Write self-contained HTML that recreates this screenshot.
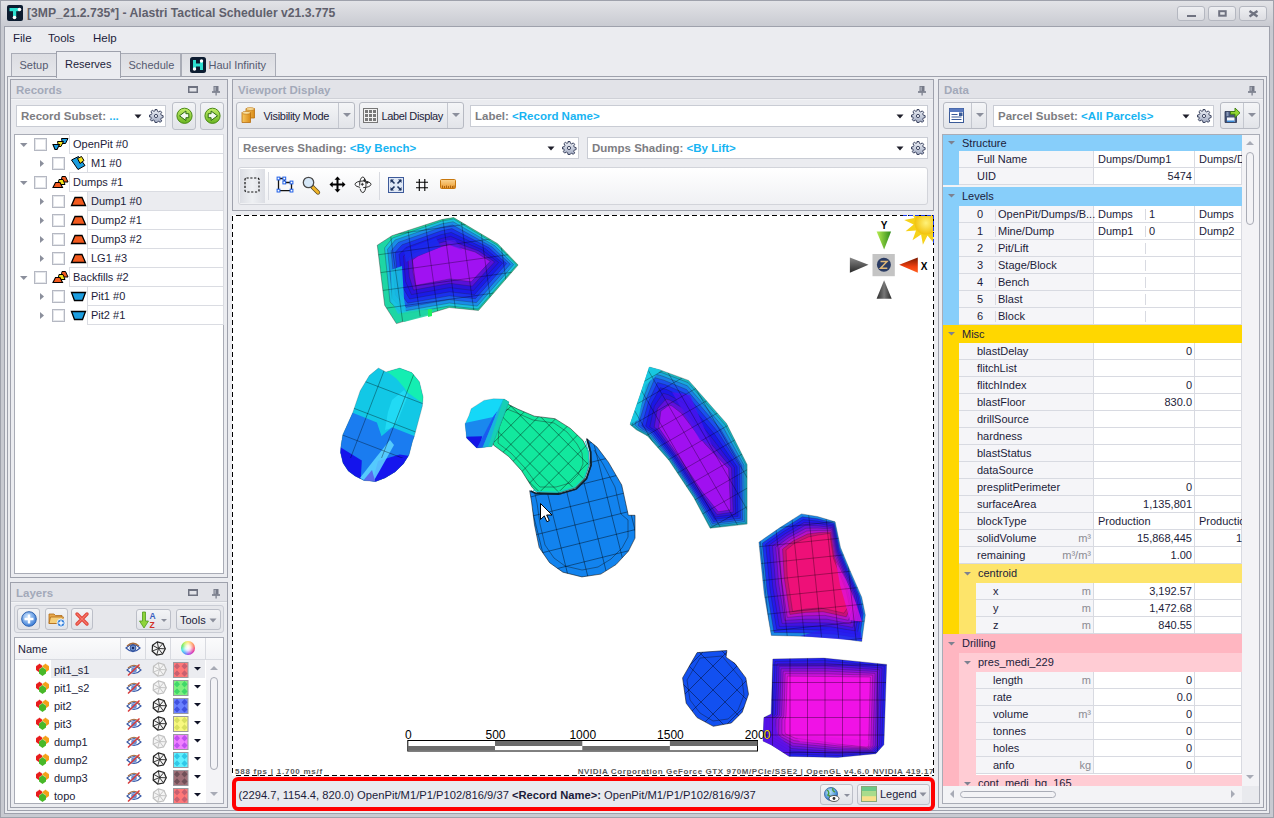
<!DOCTYPE html><html><head><meta charset="utf-8"><style>
*{box-sizing:border-box;margin:0;padding:0}
html,body{width:1274px;height:818px;overflow:hidden}
body{position:relative;background:#c8cad1;font-family:"Liberation Sans",sans-serif;font-size:11px;color:#1e1e38}
.a{position:absolute}
.t{position:absolute;white-space:nowrap;line-height:13px}
svg{position:absolute;overflow:visible}
.hd{position:absolute;white-space:nowrap;font-weight:bold;font-size:11.5px;color:#a3a9b9;line-height:13px}
.lb{font-weight:bold;color:#7d7d82}
.cy{font-weight:bold;color:#17b4f2}
</style></head><body><div class="a" style="left:0px;top:0px;width:1274px;height:26px;background:linear-gradient(#e5e6ea,#dddee3)"></div>
<div class="a" style="left:0px;top:0px;width:1274px;height:818px;border:1px solid #9ea1ab"></div>
<div class="a" style="left:0px;top:0px;width:1274px;height:26px;background:linear-gradient(#e2e3e7,#d8d9de 40%,#c9cbd2);border:1px solid #9ea1ab;border-bottom:none"></div>
<div class="a" style="left:4px;top:26px;width:1266px;height:788px;background:#ebecf0;border:1px solid #9ea1ac"></div>
<div class="t" style="left:27px;top:7px;font-size:12.2px;font-weight:bold;color:#5f606c">[3MP_21.2.735*] - Alastri Tactical Scheduler v21.3.775</div>
<svg style="left:7px;top:5px" width="16" height="16"><rect x="0" y="0" width="16" height="16" rx="2" fill="#0c1c30"/><rect x="2.5" y="3" width="10" height="3.2" fill="#2ee0d0"/><rect x="6" y="3" width="3.2" height="10" fill="#2ee0d0"/><circle cx="12.5" cy="4.5" r="1.8" fill="#fff"/><circle cx="7.5" cy="12.5" r="1.8" fill="#fff"/></svg>
<div class="a" style="left:1177px;top:6px;width:28px;height:15px;border:1px solid #b4b7c0;border-radius:3px;background:linear-gradient(#eeeff2,#dcdde2)"></div>
<div class="a" style="left:1208px;top:6px;width:28px;height:15px;border:1px solid #b4b7c0;border-radius:3px;background:linear-gradient(#eeeff2,#dcdde2)"></div>
<div class="a" style="left:1239px;top:6px;width:28px;height:15px;border:1px solid #b4b7c0;border-radius:3px;background:linear-gradient(#eeeff2,#dcdde2)"></div>
<svg style="left:1177px;top:6px" width="100" height="15"><rect x="10" y="9" width="9" height="2" fill="#6f7280"/><rect x="42.2" y="5.2" width="6.5" height="4.5" fill="none" stroke="#6f7280" stroke-width="2"/><path d="M72.5 5 L80.5 10.5 M80.5 5 L72.5 10.5" stroke="#6f7280" stroke-width="2.4"/></svg>
<div class="t" style="left:13px;top:31.5px;font-size:11.5px;color:#1c1c3a">File</div>
<div class="t" style="left:48px;top:31.5px;font-size:11.5px;color:#1c1c3a">Tools</div>
<div class="t" style="left:93px;top:31.5px;font-size:11.5px;color:#1c1c3a">Help</div>
<div class="a" style="left:7px;top:76px;width:1260px;height:735px;border:1px solid #9ea1ac;background:#ebecf0"></div>
<div class="a" style="left:11px;top:53px;width:46px;height:23px;background:linear-gradient(#dcdde2,#e6e7eb);border:1px solid #a9acb6;border-bottom:none"></div>
<div class="t" style="left:19.5px;top:59px;font-size:11px;color:#555a70;z-index:3">Setup</div>
<div class="a" style="left:56px;top:51px;width:65px;height:27px;background:#ebecf0;border:1px solid #9ea1ac;border-bottom:none;z-index:2"></div>
<div class="t" style="left:65px;top:58px;font-size:11px;color:#1c1c3a;z-index:3">Reserves</div>
<div class="a" style="left:120px;top:53px;width:61px;height:23px;background:linear-gradient(#dcdde2,#e6e7eb);border:1px solid #a9acb6;border-bottom:none"></div>
<div class="t" style="left:128.5px;top:59px;font-size:11px;color:#555a70;z-index:3">Schedule</div>
<div class="a" style="left:181px;top:53px;width:95px;height:23px;background:linear-gradient(#dcdde2,#e6e7eb);border:1px solid #a9acb6;border-bottom:none"></div>
<div class="t" style="left:208.5px;top:59px;font-size:11px;color:#555a70;z-index:3">Haul Infinity</div>
<svg style="left:190px;top:57px;z-index:3" width="16" height="16"><rect width="16" height="16" rx="2.5" fill="#0c1c30"/><rect x="3" y="3" width="3" height="10" fill="#2ee0d0"/><rect x="10" y="3" width="3" height="10" fill="#2ee0d0"/><rect x="3" y="6.5" width="10" height="3" fill="#2ee0d0"/><circle cx="11.5" cy="4" r="1.7" fill="#fff"/><circle cx="4.5" cy="12" r="1.7" fill="#fff"/></svg>
<div class="a" style="left:10px;top:79px;width:218px;height:499px;border:1px solid #9ea1ac;background:#ebecf0"></div>
<div class="a" style="left:11px;top:80px;width:216px;height:18px;background:#e2e3e8"></div>
<div class="a" style="left:11px;top:98px;width:216px;height:1px;background:#cfd1d7"></div>
<div class="a" style="left:11px;top:99px;width:216px;height:1px;background:#f3f4f6"></div>
<div class="hd" style="left:16px;top:84px">Records</div>
<svg style="left:212px;top:86px" width="8" height="10"><rect x="1.5" y="0" width="5" height="5.5" fill="#767a88"/><rect x="2.5" y="0.8" width="1.2" height="4" fill="#b8bcc6"/><rect x="0" y="5.2" width="8" height="1.6" fill="#767a88"/><rect x="3.5" y="6.5" width="1.2" height="3" fill="#767a88"/></svg>
<svg style="left:188px;top:86px" width="10" height="7"><rect x="0.75" y="0.75" width="8.5" height="5.5" fill="none" stroke="#6e7280" stroke-width="1.5"/><rect x="0" y="0" width="10" height="2" fill="#6e7280"/></svg>
<div class="a" style="left:10px;top:582px;width:218px;height:226px;border:1px solid #9ea1ac;background:#ebecf0"></div>
<div class="a" style="left:11px;top:583px;width:216px;height:18px;background:#e2e3e8"></div>
<div class="a" style="left:11px;top:601px;width:216px;height:1px;background:#cfd1d7"></div>
<div class="a" style="left:11px;top:602px;width:216px;height:1px;background:#f3f4f6"></div>
<div class="hd" style="left:16px;top:587px">Layers</div>
<svg style="left:212px;top:589px" width="8" height="10"><rect x="1.5" y="0" width="5" height="5.5" fill="#767a88"/><rect x="2.5" y="0.8" width="1.2" height="4" fill="#b8bcc6"/><rect x="0" y="5.2" width="8" height="1.6" fill="#767a88"/><rect x="3.5" y="6.5" width="1.2" height="3" fill="#767a88"/></svg>
<svg style="left:188px;top:589px" width="10" height="7"><rect x="0.75" y="0.75" width="8.5" height="5.5" fill="none" stroke="#6e7280" stroke-width="1.5"/><rect x="0" y="0" width="10" height="2" fill="#6e7280"/></svg>
<div class="a" style="left:232px;top:79px;width:702px;height:132px;border:1px solid #9ea1ac;background:#ebecf0"></div>
<div class="a" style="left:233px;top:80px;width:700px;height:18px;background:#e2e3e8"></div>
<div class="a" style="left:233px;top:98px;width:700px;height:1px;background:#cfd1d7"></div>
<div class="a" style="left:233px;top:99px;width:700px;height:1px;background:#f3f4f6"></div>
<div class="hd" style="left:238px;top:84px">Viewport Display</div>
<svg style="left:918px;top:86px" width="8" height="10"><rect x="1.5" y="0" width="5" height="5.5" fill="#767a88"/><rect x="2.5" y="0.8" width="1.2" height="4" fill="#b8bcc6"/><rect x="0" y="5.2" width="8" height="1.6" fill="#767a88"/><rect x="3.5" y="6.5" width="1.2" height="3" fill="#767a88"/></svg>
<div class="a" style="left:938px;top:79px;width:326px;height:729px;border:1px solid #9ea1ac;background:#ebecf0"></div>
<div class="a" style="left:939px;top:80px;width:324px;height:18px;background:#e2e3e8"></div>
<div class="a" style="left:939px;top:98px;width:324px;height:1px;background:#cfd1d7"></div>
<div class="a" style="left:939px;top:99px;width:324px;height:1px;background:#f3f4f6"></div>
<div class="hd" style="left:944px;top:84px">Data</div>
<svg style="left:1248px;top:86px" width="8" height="10"><rect x="1.5" y="0" width="5" height="5.5" fill="#767a88"/><rect x="2.5" y="0.8" width="1.2" height="4" fill="#b8bcc6"/><rect x="0" y="5.2" width="8" height="1.6" fill="#767a88"/><rect x="3.5" y="6.5" width="1.2" height="3" fill="#767a88"/></svg>
<div class="a" style="left:16px;top:105px;width:150px;height:22px;background:#fff;border:1px solid #c9ccd4"></div>
<div class="t" style="left:21px;top:110px;font-size:11.5px"><span class="lb">Record Subset:</span> <span class="cy">...</span></div>
<svg style="left:134px;top:114px" width="8" height="5"><path d="M0.5 0.5h7l-3.5 4z" fill="#1e1e2a"/></svg>
<svg style="left:149px;top:109px" width="14" height="14" viewBox="0 0 14 14"><defs><linearGradient id="gr" x1="0" y1="0" x2="0" y2="1"><stop offset="0" stop-color="#eef1f7"/><stop offset="1" stop-color="#a2abc2"/></linearGradient></defs><path d="M6 0.5h2l.4 1.8 1.3.6 1.6-1 1.4 1.4-1 1.6.6 1.3 1.8.4v2l-1.8.4-.6 1.3 1 1.6-1.4 1.4-1.6-1-1.3.6L8 13.5H6l-.4-1.8-1.3-.6-1.6 1-1.4-1.4 1-1.6-.6-1.3L.5 8V6l1.8-.4.6-1.3-1-1.6 1.4-1.4 1.6 1 1.3-.6z" fill="url(#gr)" stroke="#3e4662" stroke-width="1"/><circle cx="7" cy="7" r="1.6" fill="#f4f6fa" stroke="#3e4662" stroke-width="1"/></svg>
<div class="a" style="left:172px;top:102px;width:24px;height:28px;border:1px solid #bcbfc8;border-radius:3px;background:linear-gradient(#f3f4f6,#e1e3e8)"></div>
<div class="a" style="left:200px;top:102px;width:24px;height:28px;border:1px solid #bcbfc8;border-radius:3px;background:linear-gradient(#f3f4f6,#e1e3e8)"></div>
<svg style="left:174.5px;top:106px" width="19" height="19"><defs><linearGradient id="gL" x1="0" y1="0" x2="0" y2="1"><stop offset="0" stop-color="#c4ee6a"/><stop offset="1" stop-color="#68b420"/></linearGradient></defs><circle cx="9.5" cy="9.8" r="7.6" fill="url(#gL)" stroke="#4a8a18"/><path d="M4.5 9.8 L10.9 5 V7.7 H13.8 V11.7 H10.9 V14.5 Z" fill="#f4f8f0" stroke="#2d6a10" stroke-width="1" stroke-linejoin="round"/></svg>
<svg style="left:202.5px;top:106px" width="19" height="19"><defs><linearGradient id="gR" x1="0" y1="0" x2="0" y2="1"><stop offset="0" stop-color="#c4ee6a"/><stop offset="1" stop-color="#68b420"/></linearGradient></defs><circle cx="9.5" cy="9.8" r="7.6" fill="url(#gR)" stroke="#4a8a18"/><path d="M14.5 9.8 L8.1 5 V7.7 H5.2 V11.7 H8.1 V14.5 Z" fill="#f4f8f0" stroke="#2d6a10" stroke-width="1" stroke-linejoin="round"/></svg>
<div class="a" style="left:14px;top:134px;width:210px;height:440px;background:#fff;border:1px solid #a9acb6"></div>
<div class="a" style="left:69px;top:134px;width:155px;height:20px;border:1px solid #dadce2;background:#fff"></div>
<svg style="left:20px;top:143px" width="8" height="5"><path d="M0 0h7.5l-3.75 4z" fill="#8b8f9c"/></svg>
<div class="a" style="left:34px;top:138px;width:13px;height:13px;border:1px solid #b5b8c2;background:#fff;box-shadow:inset 0 0 0 1px #e4e6ea"></div>
<svg style="left:52px;top:137px" width="17" height="14"><path d="M9.5 1.5h6.5l-2.5 5h-3z" fill="#1c9ee0" stroke="#000" stroke-width="1"/><path d="M5.5 4.5h6l-2.5 5h-2.5z" fill="#f4e21c" stroke="#000" stroke-width="1"/><path d="M1 7.5h6.5l-2.5 5h-2z" fill="#1c9ee0" stroke="#000" stroke-width="1.1"/></svg>
<div class="t" style="left:73px;top:138px;font-size:11px;color:#1c1c3a">OpenPit #0</div>
<div class="a" style="left:87px;top:153px;width:137px;height:20px;border:1px solid #dadce2;background:#fff"></div>
<svg style="left:40px;top:160px" width="5" height="8"><path d="M0 0v7l4-3.5z" fill="#8b8f9c"/></svg>
<div class="a" style="left:52px;top:157px;width:13px;height:13px;border:1px solid #b5b8c2;background:#fff;box-shadow:inset 0 0 0 1px #e4e6ea"></div>
<svg style="left:70px;top:155px" width="17" height="16"><path d="M1.5 5l7-3.5 6.5 9-7 4z" fill="#1c9ee0" stroke="#000" stroke-width="1"/><path d="M7.5 3.5l4-2 2.5 4-4 3z" fill="#f4e21c" stroke="#000" stroke-width="1"/></svg>
<div class="t" style="left:91px;top:157px;font-size:11px;color:#1c1c3a">M1 #0</div>
<div class="a" style="left:69px;top:172px;width:155px;height:20px;border:1px solid #dadce2;background:#fff"></div>
<svg style="left:20px;top:181px" width="8" height="5"><path d="M0 0h7.5l-3.75 4z" fill="#8b8f9c"/></svg>
<div class="a" style="left:34px;top:176px;width:13px;height:13px;border:1px solid #b5b8c2;background:#fff;box-shadow:inset 0 0 0 1px #e4e6ea"></div>
<svg style="left:52px;top:175px" width="17" height="14"><path d="M10 1.5h3.5l2.5 5.5h-7z" fill="#f25a1e" stroke="#000" stroke-width="1"/><path d="M7 4.5h4l2 5h-7z" fill="#f4e21c" stroke="#000" stroke-width="1"/><path d="M3.5 7.5h4.5l2.5 5H1z" fill="#f25a1e" stroke="#000" stroke-width="1.1"/></svg>
<div class="t" style="left:73px;top:176px;font-size:11px;color:#1c1c3a">Dumps #1</div>
<div class="a" style="left:87px;top:191px;width:137px;height:20px;border:1px solid #dadce2;background:#ebecf0"></div>
<svg style="left:40px;top:198px" width="5" height="8"><path d="M0 0v7l4-3.5z" fill="#8b8f9c"/></svg>
<div class="a" style="left:52px;top:195px;width:13px;height:13px;border:1px solid #b5b8c2;background:#fff;box-shadow:inset 0 0 0 1px #e4e6ea"></div>
<svg style="left:70px;top:195px" width="17" height="13"><path d="M5 2.5h7l3.5 8H1.5z" fill="#f25a1e" stroke="#000" stroke-width="1.3"/></svg>
<div class="t" style="left:91px;top:195px;font-size:11px;color:#1c1c3a">Dump1 #0</div>
<div class="a" style="left:87px;top:210px;width:137px;height:20px;border:1px solid #dadce2;background:#fff"></div>
<svg style="left:40px;top:217px" width="5" height="8"><path d="M0 0v7l4-3.5z" fill="#8b8f9c"/></svg>
<div class="a" style="left:52px;top:214px;width:13px;height:13px;border:1px solid #b5b8c2;background:#fff;box-shadow:inset 0 0 0 1px #e4e6ea"></div>
<svg style="left:70px;top:214px" width="17" height="13"><path d="M5 2.5h7l3.5 8H1.5z" fill="#f25a1e" stroke="#000" stroke-width="1.3"/></svg>
<div class="t" style="left:91px;top:214px;font-size:11px;color:#1c1c3a">Dump2 #1</div>
<div class="a" style="left:87px;top:229px;width:137px;height:20px;border:1px solid #dadce2;background:#fff"></div>
<svg style="left:40px;top:236px" width="5" height="8"><path d="M0 0v7l4-3.5z" fill="#8b8f9c"/></svg>
<div class="a" style="left:52px;top:233px;width:13px;height:13px;border:1px solid #b5b8c2;background:#fff;box-shadow:inset 0 0 0 1px #e4e6ea"></div>
<svg style="left:70px;top:233px" width="17" height="13"><path d="M5 2.5h7l3.5 8H1.5z" fill="#f25a1e" stroke="#000" stroke-width="1.3"/></svg>
<div class="t" style="left:91px;top:233px;font-size:11px;color:#1c1c3a">Dump3 #2</div>
<div class="a" style="left:87px;top:248px;width:137px;height:20px;border:1px solid #dadce2;background:#fff"></div>
<svg style="left:40px;top:255px" width="5" height="8"><path d="M0 0v7l4-3.5z" fill="#8b8f9c"/></svg>
<div class="a" style="left:52px;top:252px;width:13px;height:13px;border:1px solid #b5b8c2;background:#fff;box-shadow:inset 0 0 0 1px #e4e6ea"></div>
<svg style="left:70px;top:252px" width="17" height="13"><path d="M5 2.5h7l3.5 8H1.5z" fill="#f25a1e" stroke="#000" stroke-width="1.3"/></svg>
<div class="t" style="left:91px;top:252px;font-size:11px;color:#1c1c3a">LG1 #3</div>
<div class="a" style="left:69px;top:267px;width:155px;height:20px;border:1px solid #dadce2;background:#fff"></div>
<svg style="left:20px;top:276px" width="8" height="5"><path d="M0 0h7.5l-3.75 4z" fill="#8b8f9c"/></svg>
<div class="a" style="left:34px;top:271px;width:13px;height:13px;border:1px solid #b5b8c2;background:#fff;box-shadow:inset 0 0 0 1px #e4e6ea"></div>
<svg style="left:52px;top:270px" width="17" height="14"><path d="M10 1.5h3.5l2.5 5.5h-7z" fill="#f25a1e" stroke="#000" stroke-width="1"/><path d="M7 4.5h4l2 5h-7z" fill="#f4e21c" stroke="#000" stroke-width="1"/><path d="M3.5 7.5h4.5l2.5 5H1z" fill="#f25a1e" stroke="#000" stroke-width="1.1"/></svg>
<div class="t" style="left:73px;top:271px;font-size:11px;color:#1c1c3a">Backfills #2</div>
<div class="a" style="left:87px;top:286px;width:137px;height:20px;border:1px solid #dadce2;background:#fff"></div>
<svg style="left:40px;top:293px" width="5" height="8"><path d="M0 0v7l4-3.5z" fill="#8b8f9c"/></svg>
<div class="a" style="left:52px;top:290px;width:13px;height:13px;border:1px solid #b5b8c2;background:#fff;box-shadow:inset 0 0 0 1px #e4e6ea"></div>
<svg style="left:70px;top:290px" width="17" height="13"><path d="M1.5 2.5h14l-3 8h-8z" fill="#1c9ee0" stroke="#000" stroke-width="1.3"/></svg>
<div class="t" style="left:91px;top:290px;font-size:11px;color:#1c1c3a">Pit1 #0</div>
<div class="a" style="left:87px;top:305px;width:137px;height:20px;border:1px solid #dadce2;background:#fff"></div>
<svg style="left:40px;top:312px" width="5" height="8"><path d="M0 0v7l4-3.5z" fill="#8b8f9c"/></svg>
<div class="a" style="left:52px;top:309px;width:13px;height:13px;border:1px solid #b5b8c2;background:#fff;box-shadow:inset 0 0 0 1px #e4e6ea"></div>
<svg style="left:70px;top:309px" width="17" height="13"><path d="M1.5 2.5h14l-3 8h-8z" fill="#1c9ee0" stroke="#000" stroke-width="1.3"/></svg>
<div class="t" style="left:91px;top:309px;font-size:11px;color:#1c1c3a">Pit2 #1</div>
<div class="a" style="left:14px;top:605px;width:210px;height:28px;border:1px solid #c9ccd4;border-radius:3px;background:#e6e7eb"></div>
<div class="a" style="left:17px;top:608px;width:23px;height:22px;border:1px solid #bcbfc8;border-radius:3px;background:linear-gradient(#f3f4f6,#e1e3e8)"></div>
<div class="a" style="left:45px;top:608px;width:23px;height:22px;border:1px solid #bcbfc8;border-radius:3px;background:linear-gradient(#f3f4f6,#e1e3e8)"></div>
<div class="a" style="left:71px;top:608px;width:22px;height:22px;border:1px solid #bcbfc8;border-radius:3px;background:linear-gradient(#f3f4f6,#e1e3e8)"></div>
<svg style="left:21px;top:611px" width="16" height="16"><defs><radialGradient id="gp" cx="40%" cy="35%" r="65%"><stop offset="0" stop-color="#cfe6ff"/><stop offset="1" stop-color="#3d7fd8"/></radialGradient></defs><circle cx="8" cy="8" r="7.3" fill="url(#gp)" stroke="#2d62b0"/><path d="M8 3.5v9M3.5 8h9" stroke="#fff" stroke-width="2.4"/></svg>
<svg style="left:48px;top:610px" width="18" height="18"><path d="M1 4h5l1.5 1.5H14v8H1z" fill="#e8a84a" stroke="#b06a18" stroke-width="0.8"/><path d="M2.5 7h13l-2 6.5H1z" fill="#f6cf7a" stroke="#b06a18" stroke-width="0.8"/><circle cx="13" cy="13" r="4" fill="#3d86dc" stroke="#fff" stroke-width="0.8"/><path d="M13 10.5v5M10.5 13h5" stroke="#fff" stroke-width="1.4"/></svg>
<svg style="left:75px;top:612px" width="14" height="14"><path d="M2 2L12 12M12 2L2 12" stroke="#e0453a" stroke-width="3.4" stroke-linecap="round"/><path d="M2 2L12 12M12 2L2 12" stroke="#f6786a" stroke-width="1.2" stroke-linecap="round"/></svg>
<div class="a" style="left:136px;top:609px;width:35px;height:21px;border:1px solid #bcbfc8;border-radius:3px;background:linear-gradient(#f3f4f6,#e1e3e8)"></div>
<svg style="left:138px;top:610px" width="32" height="20"><path d="M4.5 2h3v9h3l-4.5 7-4.5-7h3z" fill="#8ed43a" stroke="#4f9a1a" stroke-width="0.8"/><text x="11.5" y="9" font-family="Liberation Sans" font-weight="bold" font-size="8.5" fill="#3a5ec0">A</text><text x="11.5" y="18" font-family="Liberation Sans" font-weight="bold" font-size="8.5" fill="#d03028">Z</text><path d="M23 9h6l-3 3z" fill="#8b8f9c"/></svg>
<div class="a" style="left:176px;top:609px;width:45px;height:21px;border:1px solid #bcbfc8;border-radius:3px;background:linear-gradient(#f3f4f6,#e1e3e8)"></div>
<div class="t" style="left:180px;top:614px;font-size:11px;color:#1c1c3a">Tools</div>
<svg style="left:209px;top:618px" width="8" height="5"><path d="M0.5 0.5h7l-3.5 4z" fill="#8b8f9c"/></svg>
<div class="a" style="left:14px;top:637px;width:210px;height:167px;background:#fff;border:1px solid #a9acb6"></div>
<div class="a" style="left:15px;top:638px;width:208px;height:22px;background:linear-gradient(#fbfbfc,#f1f2f5);border-bottom:1px solid #d8dae0"></div>
<div class="a" style="left:120px;top:638px;width:1px;height:22px;background:#d8dae0"></div>
<div class="a" style="left:145px;top:638px;width:1px;height:22px;background:#d8dae0"></div>
<div class="a" style="left:170px;top:638px;width:1px;height:22px;background:#d8dae0"></div>
<div class="a" style="left:205px;top:638px;width:1px;height:22px;background:#d8dae0"></div>
<div class="t" style="left:18px;top:642.5px;font-size:11px;color:#1c1c3a">Name</div>
<svg style="left:125px;top:642px" width="16" height="12"><path d="M1 6Q8 -1 15 6Q8 13 1 6z" fill="#fff" stroke="#3a5aa8" stroke-width="1.2"/><circle cx="8" cy="6" r="3" fill="#6a8fd0" stroke="#2a4a90" stroke-width="0.8"/><circle cx="8" cy="6" r="1.2" fill="#1a2a60"/><path d="M2 4Q8 -1.5 14 4" fill="none" stroke="#a86a3a" stroke-width="1.2"/></svg>
<svg style="left:151px;top:641px" width="15" height="15"><polygon points="6.3,0.8 12.0,2.4 14.3,7.8 11.5,13.0 5.7,14.0 1.2,10.2 1.5,4.3" fill="#f4f4f4" stroke="#222" stroke-width="1.2"/><path d="M7.5 7.5L6.3 0.8M7.5 7.5L12.0 2.4M7.5 7.5L14.3 7.8M7.5 7.5L11.5 13.0M7.5 7.5L5.7 14.0M7.5 7.5L1.2 10.2M7.5 7.5L1.5 4.3" stroke="#222" stroke-width="0.9"/></svg>
<div class="a" style="left:181px;top:641px;width:14px;height:14px;border-radius:50%;background:radial-gradient(circle at 50% 50%,#fff 0,rgba(255,255,255,0.85) 25%,rgba(255,255,255,0) 75%),conic-gradient(from 0deg,#ffe060,#ff6040 70deg,#e0108a 120deg,#a020e0 170deg,#3080ff 210deg,#20e0e0 250deg,#40e040 290deg,#c0f040 330deg,#ffe060)"></div>
<div class="a" style="left:51px;top:660px;width:154px;height:18px;background:#ebecf0"></div>
<svg style="left:35px;top:662px" width="15" height="14"><path d="M1 4l3.5-2.5 3.5 2.5v4l-3.5 2.5-3.5-2.5z" fill="#e81c1c"/><path d="M7 4l3.5-2.5 3.5 2.5v4l-3.5 2.5-3.5-2.5z" fill="#f4a018"/><path d="M4 7.5l3.5-2.5 3.5 2.5v4l-3.5 2.5-3.5-2.5z" fill="#48b828"/><path d="M1 4l3.5-2.5 3.5 2.5M7 4l3.5-2.5 3.5 2.5M4 7.5l3.5-2.5 3.5 2.5" stroke="#fff" stroke-opacity="0.5" fill="none" stroke-width="0.8"/></svg>
<div class="t" style="left:54px;top:664px;font-size:11px;color:#1c1c3a">pit1_s1</div>
<svg style="left:126px;top:663px" width="16" height="13"><path d="M1 7Q8 0 15 7Q8 14 1 7z" fill="#fff" stroke="#3a5aa8" stroke-width="1.1"/><circle cx="8" cy="7" r="2.8" fill="#6a8fd0"/><path d="M2 5Q8 -0.5 14 5" fill="none" stroke="#a86a3a" stroke-width="1.1"/><path d="M2 12.5L13.5 1.5" stroke="#d83a3a" stroke-width="1.5"/></svg>
<svg style="left:152px;top:662px" width="15" height="15"><polygon points="6.3,0.8 12.0,2.4 14.3,7.8 11.5,13.0 5.7,14.0 1.2,10.2 1.5,4.3" fill="#f4f4f4" stroke="#c0c0c0" stroke-width="1.2"/><path d="M7.5 7.5L6.3 0.8M7.5 7.5L12.0 2.4M7.5 7.5L14.3 7.8M7.5 7.5L11.5 13.0M7.5 7.5L5.7 14.0M7.5 7.5L1.2 10.2M7.5 7.5L1.5 4.3" stroke="#c0c0c0" stroke-width="0.9"/></svg>
<svg style="left:173px;top:662px" width="16" height="16"><rect x="0.5" y="0.5" width="14.5" height="15" fill="#ff7878" stroke="#9a9aa0"/><path d="M4 1L7 4.2L4 7.4L1 4.2ZM11.5 1L14.5 4.2L11.5 7.4L8.5 4.2ZM4 8.2L7 11.4L4 14.6L1 11.4ZM11.5 8.2L14.5 11.4L11.5 14.6L8.5 11.4Z" fill="#c86070"/></svg>
<svg style="left:194px;top:667px" width="8" height="5"><path d="M0 0h7l-3.5 3.5z" fill="#111428"/></svg>
<svg style="left:35px;top:680px" width="15" height="14"><path d="M1 4l3.5-2.5 3.5 2.5v4l-3.5 2.5-3.5-2.5z" fill="#e81c1c"/><path d="M7 4l3.5-2.5 3.5 2.5v4l-3.5 2.5-3.5-2.5z" fill="#f4a018"/><path d="M4 7.5l3.5-2.5 3.5 2.5v4l-3.5 2.5-3.5-2.5z" fill="#48b828"/><path d="M1 4l3.5-2.5 3.5 2.5M7 4l3.5-2.5 3.5 2.5M4 7.5l3.5-2.5 3.5 2.5" stroke="#fff" stroke-opacity="0.5" fill="none" stroke-width="0.8"/></svg>
<div class="t" style="left:54px;top:682px;font-size:11px;color:#1c1c3a">pit1_s2</div>
<svg style="left:126px;top:681px" width="16" height="13"><path d="M1 7Q8 0 15 7Q8 14 1 7z" fill="#fff" stroke="#3a5aa8" stroke-width="1.1"/><circle cx="8" cy="7" r="2.8" fill="#6a8fd0"/><path d="M2 5Q8 -0.5 14 5" fill="none" stroke="#a86a3a" stroke-width="1.1"/><path d="M2 12.5L13.5 1.5" stroke="#d83a3a" stroke-width="1.5"/></svg>
<svg style="left:152px;top:680px" width="15" height="15"><polygon points="6.3,0.8 12.0,2.4 14.3,7.8 11.5,13.0 5.7,14.0 1.2,10.2 1.5,4.3" fill="#f4f4f4" stroke="#c0c0c0" stroke-width="1.2"/><path d="M7.5 7.5L6.3 0.8M7.5 7.5L12.0 2.4M7.5 7.5L14.3 7.8M7.5 7.5L11.5 13.0M7.5 7.5L5.7 14.0M7.5 7.5L1.2 10.2M7.5 7.5L1.5 4.3" stroke="#c0c0c0" stroke-width="0.9"/></svg>
<svg style="left:173px;top:680px" width="16" height="16"><rect x="0.5" y="0.5" width="14.5" height="15" fill="#80f080" stroke="#9a9aa0"/><path d="M4 1L7 4.2L4 7.4L1 4.2ZM11.5 1L14.5 4.2L11.5 7.4L8.5 4.2ZM4 8.2L7 11.4L4 14.6L1 11.4ZM11.5 8.2L14.5 11.4L11.5 14.6L8.5 11.4Z" fill="#40d868"/></svg>
<svg style="left:194px;top:685px" width="8" height="5"><path d="M0 0h7l-3.5 3.5z" fill="#111428"/></svg>
<svg style="left:35px;top:698px" width="15" height="14"><path d="M1 4l3.5-2.5 3.5 2.5v4l-3.5 2.5-3.5-2.5z" fill="#e81c1c"/><path d="M7 4l3.5-2.5 3.5 2.5v4l-3.5 2.5-3.5-2.5z" fill="#f4a018"/><path d="M4 7.5l3.5-2.5 3.5 2.5v4l-3.5 2.5-3.5-2.5z" fill="#48b828"/><path d="M1 4l3.5-2.5 3.5 2.5M7 4l3.5-2.5 3.5 2.5M4 7.5l3.5-2.5 3.5 2.5" stroke="#fff" stroke-opacity="0.5" fill="none" stroke-width="0.8"/></svg>
<div class="t" style="left:54px;top:700px;font-size:11px;color:#1c1c3a">pit2</div>
<svg style="left:126px;top:699px" width="16" height="13"><path d="M1 7Q8 0 15 7Q8 14 1 7z" fill="#fff" stroke="#3a5aa8" stroke-width="1.1"/><circle cx="8" cy="7" r="2.8" fill="#6a8fd0"/><path d="M2 5Q8 -0.5 14 5" fill="none" stroke="#a86a3a" stroke-width="1.1"/><path d="M2 12.5L13.5 1.5" stroke="#d83a3a" stroke-width="1.5"/></svg>
<svg style="left:152px;top:698px" width="15" height="15"><polygon points="6.3,0.8 12.0,2.4 14.3,7.8 11.5,13.0 5.7,14.0 1.2,10.2 1.5,4.3" fill="#f4f4f4" stroke="#222" stroke-width="1.2"/><path d="M7.5 7.5L6.3 0.8M7.5 7.5L12.0 2.4M7.5 7.5L14.3 7.8M7.5 7.5L11.5 13.0M7.5 7.5L5.7 14.0M7.5 7.5L1.2 10.2M7.5 7.5L1.5 4.3" stroke="#222" stroke-width="0.9"/></svg>
<svg style="left:173px;top:698px" width="16" height="16"><rect x="0.5" y="0.5" width="14.5" height="15" fill="#6a80ff" stroke="#9a9aa0"/><path d="M4 1L7 4.2L4 7.4L1 4.2ZM11.5 1L14.5 4.2L11.5 7.4L8.5 4.2ZM4 8.2L7 11.4L4 14.6L1 11.4ZM11.5 8.2L14.5 11.4L11.5 14.6L8.5 11.4Z" fill="#4050e0"/></svg>
<svg style="left:194px;top:703px" width="8" height="5"><path d="M0 0h7l-3.5 3.5z" fill="#111428"/></svg>
<svg style="left:35px;top:716px" width="15" height="14"><path d="M1 4l3.5-2.5 3.5 2.5v4l-3.5 2.5-3.5-2.5z" fill="#e81c1c"/><path d="M7 4l3.5-2.5 3.5 2.5v4l-3.5 2.5-3.5-2.5z" fill="#f4a018"/><path d="M4 7.5l3.5-2.5 3.5 2.5v4l-3.5 2.5-3.5-2.5z" fill="#48b828"/><path d="M1 4l3.5-2.5 3.5 2.5M7 4l3.5-2.5 3.5 2.5M4 7.5l3.5-2.5 3.5 2.5" stroke="#fff" stroke-opacity="0.5" fill="none" stroke-width="0.8"/></svg>
<div class="t" style="left:54px;top:718px;font-size:11px;color:#1c1c3a">pit3</div>
<svg style="left:126px;top:717px" width="16" height="13"><path d="M1 7Q8 0 15 7Q8 14 1 7z" fill="#fff" stroke="#3a5aa8" stroke-width="1.1"/><circle cx="8" cy="7" r="2.8" fill="#6a8fd0"/><path d="M2 5Q8 -0.5 14 5" fill="none" stroke="#a86a3a" stroke-width="1.1"/><path d="M2 12.5L13.5 1.5" stroke="#d83a3a" stroke-width="1.5"/></svg>
<svg style="left:152px;top:716px" width="15" height="15"><polygon points="6.3,0.8 12.0,2.4 14.3,7.8 11.5,13.0 5.7,14.0 1.2,10.2 1.5,4.3" fill="#f4f4f4" stroke="#222" stroke-width="1.2"/><path d="M7.5 7.5L6.3 0.8M7.5 7.5L12.0 2.4M7.5 7.5L14.3 7.8M7.5 7.5L11.5 13.0M7.5 7.5L5.7 14.0M7.5 7.5L1.2 10.2M7.5 7.5L1.5 4.3" stroke="#222" stroke-width="0.9"/></svg>
<svg style="left:173px;top:716px" width="16" height="16"><rect x="0.5" y="0.5" width="14.5" height="15" fill="#f8f880" stroke="#9a9aa0"/><path d="M4 1L7 4.2L4 7.4L1 4.2ZM11.5 1L14.5 4.2L11.5 7.4L8.5 4.2ZM4 8.2L7 11.4L4 14.6L1 11.4ZM11.5 8.2L14.5 11.4L11.5 14.6L8.5 11.4Z" fill="#d8e060"/></svg>
<svg style="left:194px;top:721px" width="8" height="5"><path d="M0 0h7l-3.5 3.5z" fill="#111428"/></svg>
<svg style="left:35px;top:734px" width="15" height="14"><path d="M1 4l3.5-2.5 3.5 2.5v4l-3.5 2.5-3.5-2.5z" fill="#e81c1c"/><path d="M7 4l3.5-2.5 3.5 2.5v4l-3.5 2.5-3.5-2.5z" fill="#f4a018"/><path d="M4 7.5l3.5-2.5 3.5 2.5v4l-3.5 2.5-3.5-2.5z" fill="#48b828"/><path d="M1 4l3.5-2.5 3.5 2.5M7 4l3.5-2.5 3.5 2.5M4 7.5l3.5-2.5 3.5 2.5" stroke="#fff" stroke-opacity="0.5" fill="none" stroke-width="0.8"/></svg>
<div class="t" style="left:54px;top:736px;font-size:11px;color:#1c1c3a">dump1</div>
<svg style="left:126px;top:735px" width="16" height="13"><path d="M1 7Q8 0 15 7Q8 14 1 7z" fill="#fff" stroke="#3a5aa8" stroke-width="1.1"/><circle cx="8" cy="7" r="2.8" fill="#6a8fd0"/><path d="M2 5Q8 -0.5 14 5" fill="none" stroke="#a86a3a" stroke-width="1.1"/><path d="M2 12.5L13.5 1.5" stroke="#d83a3a" stroke-width="1.5"/></svg>
<svg style="left:152px;top:734px" width="15" height="15"><polygon points="6.3,0.8 12.0,2.4 14.3,7.8 11.5,13.0 5.7,14.0 1.2,10.2 1.5,4.3" fill="#f4f4f4" stroke="#c0c0c0" stroke-width="1.2"/><path d="M7.5 7.5L6.3 0.8M7.5 7.5L12.0 2.4M7.5 7.5L14.3 7.8M7.5 7.5L11.5 13.0M7.5 7.5L5.7 14.0M7.5 7.5L1.2 10.2M7.5 7.5L1.5 4.3" stroke="#c0c0c0" stroke-width="0.9"/></svg>
<svg style="left:173px;top:734px" width="16" height="16"><rect x="0.5" y="0.5" width="14.5" height="15" fill="#f080ff" stroke="#9a9aa0"/><path d="M4 1L7 4.2L4 7.4L1 4.2ZM11.5 1L14.5 4.2L11.5 7.4L8.5 4.2ZM4 8.2L7 11.4L4 14.6L1 11.4ZM11.5 8.2L14.5 11.4L11.5 14.6L8.5 11.4Z" fill="#c050f0"/></svg>
<svg style="left:194px;top:739px" width="8" height="5"><path d="M0 0h7l-3.5 3.5z" fill="#111428"/></svg>
<svg style="left:35px;top:752px" width="15" height="14"><path d="M1 4l3.5-2.5 3.5 2.5v4l-3.5 2.5-3.5-2.5z" fill="#e81c1c"/><path d="M7 4l3.5-2.5 3.5 2.5v4l-3.5 2.5-3.5-2.5z" fill="#f4a018"/><path d="M4 7.5l3.5-2.5 3.5 2.5v4l-3.5 2.5-3.5-2.5z" fill="#48b828"/><path d="M1 4l3.5-2.5 3.5 2.5M7 4l3.5-2.5 3.5 2.5M4 7.5l3.5-2.5 3.5 2.5" stroke="#fff" stroke-opacity="0.5" fill="none" stroke-width="0.8"/></svg>
<div class="t" style="left:54px;top:754px;font-size:11px;color:#1c1c3a">dump2</div>
<svg style="left:126px;top:753px" width="16" height="13"><path d="M1 7Q8 0 15 7Q8 14 1 7z" fill="#fff" stroke="#3a5aa8" stroke-width="1.1"/><circle cx="8" cy="7" r="2.8" fill="#6a8fd0"/><path d="M2 5Q8 -0.5 14 5" fill="none" stroke="#a86a3a" stroke-width="1.1"/><path d="M2 12.5L13.5 1.5" stroke="#d83a3a" stroke-width="1.5"/></svg>
<svg style="left:152px;top:752px" width="15" height="15"><polygon points="6.3,0.8 12.0,2.4 14.3,7.8 11.5,13.0 5.7,14.0 1.2,10.2 1.5,4.3" fill="#f4f4f4" stroke="#222" stroke-width="1.2"/><path d="M7.5 7.5L6.3 0.8M7.5 7.5L12.0 2.4M7.5 7.5L14.3 7.8M7.5 7.5L11.5 13.0M7.5 7.5L5.7 14.0M7.5 7.5L1.2 10.2M7.5 7.5L1.5 4.3" stroke="#222" stroke-width="0.9"/></svg>
<svg style="left:173px;top:752px" width="16" height="16"><rect x="0.5" y="0.5" width="14.5" height="15" fill="#60f0ff" stroke="#9a9aa0"/><path d="M4 1L7 4.2L4 7.4L1 4.2ZM11.5 1L14.5 4.2L11.5 7.4L8.5 4.2ZM4 8.2L7 11.4L4 14.6L1 11.4ZM11.5 8.2L14.5 11.4L11.5 14.6L8.5 11.4Z" fill="#30c8e8"/></svg>
<svg style="left:194px;top:757px" width="8" height="5"><path d="M0 0h7l-3.5 3.5z" fill="#111428"/></svg>
<svg style="left:35px;top:770px" width="15" height="14"><path d="M1 4l3.5-2.5 3.5 2.5v4l-3.5 2.5-3.5-2.5z" fill="#e81c1c"/><path d="M7 4l3.5-2.5 3.5 2.5v4l-3.5 2.5-3.5-2.5z" fill="#f4a018"/><path d="M4 7.5l3.5-2.5 3.5 2.5v4l-3.5 2.5-3.5-2.5z" fill="#48b828"/><path d="M1 4l3.5-2.5 3.5 2.5M7 4l3.5-2.5 3.5 2.5M4 7.5l3.5-2.5 3.5 2.5" stroke="#fff" stroke-opacity="0.5" fill="none" stroke-width="0.8"/></svg>
<div class="t" style="left:54px;top:772px;font-size:11px;color:#1c1c3a">dump3</div>
<svg style="left:126px;top:771px" width="16" height="13"><path d="M1 7Q8 0 15 7Q8 14 1 7z" fill="#fff" stroke="#3a5aa8" stroke-width="1.1"/><circle cx="8" cy="7" r="2.8" fill="#6a8fd0"/><path d="M2 5Q8 -0.5 14 5" fill="none" stroke="#a86a3a" stroke-width="1.1"/><path d="M2 12.5L13.5 1.5" stroke="#d83a3a" stroke-width="1.5"/></svg>
<svg style="left:152px;top:770px" width="15" height="15"><polygon points="6.3,0.8 12.0,2.4 14.3,7.8 11.5,13.0 5.7,14.0 1.2,10.2 1.5,4.3" fill="#f4f4f4" stroke="#222" stroke-width="1.2"/><path d="M7.5 7.5L6.3 0.8M7.5 7.5L12.0 2.4M7.5 7.5L14.3 7.8M7.5 7.5L11.5 13.0M7.5 7.5L5.7 14.0M7.5 7.5L1.2 10.2M7.5 7.5L1.5 4.3" stroke="#222" stroke-width="0.9"/></svg>
<svg style="left:173px;top:770px" width="16" height="16"><rect x="0.5" y="0.5" width="14.5" height="15" fill="#a07078" stroke="#9a9aa0"/><path d="M4 1L7 4.2L4 7.4L1 4.2ZM11.5 1L14.5 4.2L11.5 7.4L8.5 4.2ZM4 8.2L7 11.4L4 14.6L1 11.4ZM11.5 8.2L14.5 11.4L11.5 14.6L8.5 11.4Z" fill="#705058"/></svg>
<svg style="left:194px;top:775px" width="8" height="5"><path d="M0 0h7l-3.5 3.5z" fill="#111428"/></svg>
<svg style="left:35px;top:788px" width="15" height="14"><path d="M1 4l3.5-2.5 3.5 2.5v4l-3.5 2.5-3.5-2.5z" fill="#e81c1c"/><path d="M7 4l3.5-2.5 3.5 2.5v4l-3.5 2.5-3.5-2.5z" fill="#f4a018"/><path d="M4 7.5l3.5-2.5 3.5 2.5v4l-3.5 2.5-3.5-2.5z" fill="#48b828"/><path d="M1 4l3.5-2.5 3.5 2.5M7 4l3.5-2.5 3.5 2.5M4 7.5l3.5-2.5 3.5 2.5" stroke="#fff" stroke-opacity="0.5" fill="none" stroke-width="0.8"/></svg>
<div class="t" style="left:54px;top:790px;font-size:11px;color:#1c1c3a">topo</div>
<svg style="left:126px;top:789px" width="16" height="13"><path d="M1 7Q8 0 15 7Q8 14 1 7z" fill="#fff" stroke="#3a5aa8" stroke-width="1.1"/><circle cx="8" cy="7" r="2.8" fill="#6a8fd0"/><path d="M2 5Q8 -0.5 14 5" fill="none" stroke="#a86a3a" stroke-width="1.1"/><path d="M2 12.5L13.5 1.5" stroke="#d83a3a" stroke-width="1.5"/></svg>
<svg style="left:152px;top:788px" width="15" height="15"><polygon points="6.3,0.8 12.0,2.4 14.3,7.8 11.5,13.0 5.7,14.0 1.2,10.2 1.5,4.3" fill="#f4f4f4" stroke="#c0c0c0" stroke-width="1.2"/><path d="M7.5 7.5L6.3 0.8M7.5 7.5L12.0 2.4M7.5 7.5L14.3 7.8M7.5 7.5L11.5 13.0M7.5 7.5L5.7 14.0M7.5 7.5L1.2 10.2M7.5 7.5L1.5 4.3" stroke="#c0c0c0" stroke-width="0.9"/></svg>
<svg style="left:173px;top:788px" width="16" height="16"><rect x="0.5" y="0.5" width="14.5" height="15" fill="#ff7878" stroke="#9a9aa0"/><path d="M4 1L7 4.2L4 7.4L1 4.2ZM11.5 1L14.5 4.2L11.5 7.4L8.5 4.2ZM4 8.2L7 11.4L4 14.6L1 11.4ZM11.5 8.2L14.5 11.4L11.5 14.6L8.5 11.4Z" fill="#c86070"/></svg>
<svg style="left:194px;top:793px" width="8" height="5"><path d="M0 0h7l-3.5 3.5z" fill="#111428"/></svg>
<div class="a" style="left:206px;top:660px;width:17px;height:143px;background:#f3f3f6"></div>
<svg style="left:210px;top:665px" width="9" height="6"><path d="M0 5h8l-4-4z" fill="#a8abb6"/></svg>
<svg style="left:210px;top:792px" width="9" height="6"><path d="M0 0h8l-4 4z" fill="#a8abb6"/></svg>
<div class="a" style="left:210px;top:677px;width:8px;height:93px;border:1px solid #a9acb6;border-radius:4px;background:#f3f3f6"></div>
<div class="a" style="left:236px;top:102px;width:119px;height:27px;border:1px solid #b7bac3;border-radius:3px;background:linear-gradient(#f4f5f7,#e2e4e9)"></div>
<div class="a" style="left:338px;top:103px;width:1px;height:25px;background:#c4c7cf"></div>
<svg style="left:343px;top:113px" width="9" height="5"><path d="M0 0h8l-4 4z" fill="#8b8f9c"/></svg>
<svg style="left:241px;top:107px" width="15" height="17"><defs><linearGradient id="or" x1="0" y1="0" x2="1" y2="0"><stop offset="0" stop-color="#f8c860"/><stop offset="1" stop-color="#d88a18"/></linearGradient></defs><path d="M5 1.5h8.5v9.5H5z" fill="url(#or)" stroke="#b86e10" stroke-width="0.8"/><ellipse cx="9.2" cy="2" rx="4.2" ry="1.4" fill="#fbe2a0" stroke="#b86e10" stroke-width="0.6"/><path d="M1 5.5h8.5v10H1z" fill="url(#or)" stroke="#b86e10" stroke-width="0.8"/><ellipse cx="5.2" cy="5.8" rx="4.2" ry="1.4" fill="#fbe2a0" stroke="#b86e10" stroke-width="0.6"/></svg>
<div class="t" style="left:263.5px;top:110px;font-size:11px;letter-spacing:-0.3px;color:#1c1c3a">Visibility Mode</div>
<div class="a" style="left:359px;top:102px;width:105px;height:27px;border:1px solid #b7bac3;border-radius:3px;background:linear-gradient(#f4f5f7,#e2e4e9)"></div>
<div class="a" style="left:447px;top:103px;width:1px;height:25px;background:#c4c7cf"></div>
<svg style="left:452px;top:113px" width="9" height="5"><path d="M0 0h8l-4 4z" fill="#8b8f9c"/></svg>
<svg style="left:363px;top:108px" width="15" height="15"><rect x="0.5" y="0.5" width="14" height="14" fill="#f2f2f2" stroke="#777"/><rect x="2" y="2" width="3" height="3" fill="#777"/><rect x="2" y="6" width="3" height="3" fill="#777"/><rect x="2" y="10" width="3" height="3" fill="#777"/><rect x="6" y="2" width="3" height="3" fill="#777"/><rect x="6" y="6" width="3" height="3" fill="#777"/><rect x="6" y="10" width="3" height="3" fill="#777"/><rect x="10" y="2" width="3" height="3" fill="#777"/><rect x="10" y="6" width="3" height="3" fill="#777"/><rect x="10" y="10" width="3" height="3" fill="#777"/></svg>
<div class="t" style="left:381.5px;top:110px;font-size:11px;letter-spacing:-0.35px;color:#1c1c3a">Label Display</div>
<div class="a" style="left:470px;top:105px;width:458px;height:22px;background:#fff;border:1px solid #c9ccd4"></div>
<div class="t" style="left:475px;top:110px;font-size:11.5px"><span class="lb">Label:</span> <span class="cy">&lt;Record Name&gt;</span></div>
<svg style="left:896px;top:114px" width="8" height="5"><path d="M0.5 0.5h7l-3.5 4z" fill="#1e1e2a"/></svg>
<svg style="left:911px;top:109px" width="14" height="14" viewBox="0 0 14 14"><defs><linearGradient id="gr" x1="0" y1="0" x2="0" y2="1"><stop offset="0" stop-color="#eef1f7"/><stop offset="1" stop-color="#a2abc2"/></linearGradient></defs><path d="M6 0.5h2l.4 1.8 1.3.6 1.6-1 1.4 1.4-1 1.6.6 1.3 1.8.4v2l-1.8.4-.6 1.3 1 1.6-1.4 1.4-1.6-1-1.3.6L8 13.5H6l-.4-1.8-1.3-.6-1.6 1-1.4-1.4 1-1.6-.6-1.3L.5 8V6l1.8-.4.6-1.3-1-1.6 1.4-1.4 1.6 1 1.3-.6z" fill="url(#gr)" stroke="#3e4662" stroke-width="1"/><circle cx="7" cy="7" r="1.6" fill="#f4f6fa" stroke="#3e4662" stroke-width="1"/></svg>
<div class="a" style="left:238px;top:137px;width:341px;height:22px;background:#fff;border:1px solid #c9ccd4"></div>
<div class="t" style="left:243px;top:142px;font-size:11.5px"><span class="lb">Reserves Shading:</span> <span class="cy">&lt;By Bench&gt;</span></div>
<svg style="left:547px;top:146px" width="8" height="5"><path d="M0.5 0.5h7l-3.5 4z" fill="#1e1e2a"/></svg>
<svg style="left:562px;top:141px" width="14" height="14" viewBox="0 0 14 14"><defs><linearGradient id="gr" x1="0" y1="0" x2="0" y2="1"><stop offset="0" stop-color="#eef1f7"/><stop offset="1" stop-color="#a2abc2"/></linearGradient></defs><path d="M6 0.5h2l.4 1.8 1.3.6 1.6-1 1.4 1.4-1 1.6.6 1.3 1.8.4v2l-1.8.4-.6 1.3 1 1.6-1.4 1.4-1.6-1-1.3.6L8 13.5H6l-.4-1.8-1.3-.6-1.6 1-1.4-1.4 1-1.6-.6-1.3L.5 8V6l1.8-.4.6-1.3-1-1.6 1.4-1.4 1.6 1 1.3-.6z" fill="url(#gr)" stroke="#3e4662" stroke-width="1"/><circle cx="7" cy="7" r="1.6" fill="#f4f6fa" stroke="#3e4662" stroke-width="1"/></svg>
<div class="a" style="left:587px;top:137px;width:341px;height:22px;background:#fff;border:1px solid #c9ccd4"></div>
<div class="t" style="left:592px;top:142px;font-size:11.5px"><span class="lb">Dumps Shading:</span> <span class="cy">&lt;By Lift&gt;</span></div>
<svg style="left:896px;top:146px" width="8" height="5"><path d="M0.5 0.5h7l-3.5 4z" fill="#1e1e2a"/></svg>
<svg style="left:911px;top:141px" width="14" height="14" viewBox="0 0 14 14"><defs><linearGradient id="gr" x1="0" y1="0" x2="0" y2="1"><stop offset="0" stop-color="#eef1f7"/><stop offset="1" stop-color="#a2abc2"/></linearGradient></defs><path d="M6 0.5h2l.4 1.8 1.3.6 1.6-1 1.4 1.4-1 1.6.6 1.3 1.8.4v2l-1.8.4-.6 1.3 1 1.6-1.4 1.4-1.6-1-1.3.6L8 13.5H6l-.4-1.8-1.3-.6-1.6 1-1.4-1.4 1-1.6-.6-1.3L.5 8V6l1.8-.4.6-1.3-1-1.6 1.4-1.4 1.6 1 1.3-.6z" fill="url(#gr)" stroke="#3e4662" stroke-width="1"/><circle cx="7" cy="7" r="1.6" fill="#f4f6fa" stroke="#3e4662" stroke-width="1"/></svg>
<div class="a" style="left:238px;top:167px;width:690px;height:38px;border:1px solid #d2d4da;border-radius:3px;background:linear-gradient(#ffffff,#f0f1f4)"></div>
<div class="a" style="left:240px;top:169px;width:25px;height:34px;background:linear-gradient(90deg,#dcdee4,#eef0f3 50%,#dcdee4)"></div>
<svg style="left:244px;top:177px" width="17" height="17"><rect x="1" y="1" width="14" height="14" rx="1.5" fill="none" stroke="#111" stroke-dasharray="2.2,1.6" stroke-width="1.2"/></svg>
<div class="a" style="left:268px;top:172px;width:1px;height:28px;background:#d8dae0"></div>
<div class="a" style="left:379px;top:172px;width:1px;height:28px;background:#d8dae0"></div>
<svg style="left:276px;top:176px" width="18" height="18"><path d="M2.5 2.5h5.8v4h7.2v8.1H2.5z" fill="none" stroke="#111" stroke-width="1.3"/><rect x="1.1" y="1.1" width="2.8" height="2.8" fill="#fff" stroke="#2060e8" stroke-width="1"/><rect x="6.9" y="1.1" width="2.8" height="2.8" fill="#fff" stroke="#2060e8" stroke-width="1"/><rect x="6.9" y="5.1" width="2.8" height="2.8" fill="#fff" stroke="#2060e8" stroke-width="1"/><rect x="14.1" y="5.1" width="2.8" height="2.8" fill="#fff" stroke="#2060e8" stroke-width="1"/><rect x="14.1" y="13.2" width="2.8" height="2.8" fill="#fff" stroke="#2060e8" stroke-width="1"/><rect x="1.1" y="13.2" width="2.8" height="2.8" fill="#fff" stroke="#2060e8" stroke-width="1"/></svg>
<svg style="left:302px;top:176px" width="18" height="18"><path d="M10.5 11l5.5 5.5" stroke="#5a4a20" stroke-width="4.2" stroke-linecap="round"/><path d="M10.5 11l5.5 5.5" stroke="#f0b428" stroke-width="2.8" stroke-linecap="round"/><circle cx="6.5" cy="6.5" r="5.2" fill="#d6e8f8" stroke="#4a4a4a" stroke-width="1.3"/></svg>
<svg style="left:329px;top:176px" width="17" height="17"><path d="M8.5 0.5l3 3.2h-2v3.8h3.8v-2l3.2 3-3.2 3v-2H9.5v3.8h2l-3 3.2-3-3.2h2V9.5H3.7v2L0.5 8.5l3.2-3v2h3.8V3.7h-2z" fill="#000"/></svg>
<svg style="left:354px;top:176px" width="18" height="18"><ellipse cx="9" cy="8.3" rx="8" ry="3.3" fill="none" stroke="#333" stroke-width="1" stroke-dasharray="9,3,30,4"/><ellipse cx="8.8" cy="8.8" rx="3.2" ry="7.8" fill="none" stroke="#333" stroke-width="1" stroke-dasharray="14,3,40"/><path d="M8.3 6.8v3M6.8 8.3h3M13.2 5v3M11.7 6.5h3M10.5 2.8v3M9 4.3h3" stroke="#222" stroke-width="0.9"/></svg>
<svg style="left:388px;top:177px" width="17" height="17"><rect x="0.5" y="0.5" width="15" height="15" fill="#dfe8f6" stroke="#3d5a9a"/><path d="M3 3l3.5 3.5M13 3l-3.5 3.5M3 13l3.5-3.5M13 13l-3.5-3.5" stroke="#1e3460" stroke-width="1.6"/><path d="M2.5 2.5h3.5l-3.5 3.5zM13.5 2.5h-3.5l3.5 3.5zM2.5 13.5h3.5l-3.5-3.5zM13.5 13.5h-3.5l3.5-3.5z" fill="#1e3460"/></svg>
<svg style="left:415px;top:178px" width="14" height="14"><path d="M4.3 1v12M9.8 1v12M1 4.3h12M1 9.7h12" stroke="#000" stroke-width="1.1"/></svg>
<svg style="left:440px;top:179px" width="16" height="11"><defs><linearGradient id="rul" x1="0" y1="0" x2="0" y2="1"><stop offset="0" stop-color="#fbd592"/><stop offset="1" stop-color="#ec9a2c"/></linearGradient></defs><rect x="0.5" y="0.5" width="15" height="9" rx="1" fill="url(#rul)" stroke="#c8780e"/><path d="M2.5 9v-2.5M4.5 9v-2M6.5 9v-2.5M8.5 9v-2M10.5 9v-2.5M12.5 9v-2M14 9v-2.5" stroke="#9a5408" stroke-width="0.8"/></svg>
<div class="a" style="left:232px;top:215px;width:702px;height:561px;background:#fff"></div>
<svg style="left:0;top:0" width="1274" height="818"><polygon points="377.3,245.2 392.0,235.7 441.8,219.5 453.6,217.6 497.6,243.7 518.1,265.0 478.5,310.4 449.2,307.5 396.4,323.6 384.7,305.3" fill="#1ed6a4" stroke="#222" stroke-opacity="0.55" stroke-width="0.7"/><polygon points="384.5,248.0 392.5,238.0 442.0,221.0 453.6,219.0 497.0,245.0 516.5,265.0 478.0,309.0 449.2,306.0 403.0,314.0 390.0,302.0" fill="#19c0e0" stroke="#222" stroke-opacity="0.4" stroke-width="0.7"/><polygon points="387.5,249.3 395.2,239.9 441.8,223.8 453.1,221.7 494.7,245.7 513.7,264.6 477.3,306.1 449.3,303.1 404.3,311.0 392.5,298.8" fill="#1a8ce8" stroke="#222" stroke-opacity="0.4" stroke-width="0.7"/><polygon points="391.1,250.8 398.5,242.3 441.5,227.2 452.6,225.0 491.8,246.7 510.3,264.1 476.4,302.6 449.4,299.6 406.0,307.3 395.4,294.9" fill="#1a5cf0" stroke="#222" stroke-opacity="0.4" stroke-width="0.7"/><polygon points="395.1,252.5 402.1,244.8 441.2,230.8 451.9,228.6 488.7,247.6 506.6,263.6 475.4,298.7 449.5,295.8 407.7,303.2 398.7,290.7" fill="#1a30ee" stroke="#222" stroke-opacity="0.4" stroke-width="0.7"/><polygon points="399.2,254.3 405.9,247.5 440.9,234.7 451.3,232.4 485.4,248.7 502.7,263.1 474.4,294.7 449.6,291.8 409.6,299.0 402.1,286.2" fill="#1a1ae6" stroke="#222" stroke-opacity="0.4" stroke-width="0.7"/><polygon points="403.5,256.1 409.8,250.2 440.6,238.7 450.6,236.3 482.1,249.8 498.6,262.5 473.4,290.5 449.7,287.6 411.5,294.6 405.6,281.6" fill="#2a12dc" stroke="#222" stroke-opacity="0.4" stroke-width="0.7"/><polygon points="408.0,258.0 413.9,253.1 440.3,242.8 449.9,240.4 478.6,250.9 494.5,261.9 472.3,286.2 449.8,283.3 413.5,290.1 409.3,276.9" fill="#5a10d8" stroke="#222" stroke-opacity="0.4" stroke-width="0.7"/><polygon points="412.5,259.9 418.0,256.0 440.0,247.0 449.2,244.5 475.0,252.0 490.2,261.3 471.2,281.8 449.9,278.9 415.5,285.5 413.0,272.0" fill="#a012f2" stroke="#222" stroke-opacity="0.4" stroke-width="0.7"/><polygon points="404,250 436,238 441,247 418,256 406,262" fill="#1a2cf0" fill-opacity="0.85"/><polygon points="391,270 402,266 404,298 406,312 398,314 392,302" fill="#18c4e2" fill-opacity="0.85"/><polygon points="398,314 410,311 431,309 431,315 404,322" fill="#1ed6a4" fill-opacity="0.9"/><polygon points="428,309 432,309 432,316 428,317" fill="#20f060"/><polygon points="444,240 455,240 462,250 452,246" fill="#5020f0" fill-opacity="0.6"/><clipPath id="c1"><polygon points="377.3,245.2 392.0,235.7 441.8,219.5 453.6,217.6 497.6,243.7 518.1,265.0 478.5,310.4 449.2,307.5 396.4,323.6 384.7,305.3"/></clipPath><path clip-path="url(#c1)" d="M217.3 132.0L635.6 73.2M219.8 149.8L638.1 91.0M222.3 167.6L640.6 108.8M224.8 185.4L643.1 126.7M227.3 203.3L645.6 144.5M229.8 221.1L648.1 162.3M232.3 238.9L650.6 180.1M234.8 256.7L653.1 198.0M237.4 274.6L655.6 215.8M239.9 292.4L658.1 233.6M242.4 310.2L660.6 251.4M244.9 328.0L663.2 269.3M247.4 345.9L665.7 287.1M249.9 363.7L668.2 304.9M252.4 381.5L670.7 322.7M254.9 399.3L673.2 340.6M257.4 417.2L675.7 358.4M259.9 435.0L678.2 376.2M262.4 452.8L680.7 394.0M580.0 31.3L638.8 449.6M562.2 33.8L621.0 452.1M544.4 36.3L603.2 454.6M526.6 38.8L585.3 457.1M508.7 41.3L567.5 459.6M490.9 43.8L549.7 462.1M473.1 46.3L531.9 464.6M455.3 48.8L514.0 467.1M437.4 51.4L496.2 469.6M419.6 53.9L478.4 472.1M401.8 56.4L460.6 474.6M384.0 58.9L442.7 477.2M366.1 61.4L424.9 479.7M348.3 63.9L407.1 482.2M330.5 66.4L389.3 484.7M312.7 68.9L371.4 487.2M294.8 71.4L353.6 489.7M277.0 73.9L335.8 492.2M259.2 76.4L318.0 494.7" stroke="#000" stroke-opacity="0.45" stroke-width="0.7" fill="none"/><clipPath id="cap"><polygon points="378.4,368.1 386.0,371.9 399.7,368.1 411.8,372.6 419.4,381.7 423.1,396.9 422.4,406.0 414.1,437.0 412.6,441.0 409.0,455.0 403.3,464.0 395.0,472.0 385.0,478.0 375.8,481.5 364.0,480.5 355.0,476.0 348.3,471.0 343.0,463.0 340.5,452.6 341.0,445.0 342.8,434.7 352.7,412.8 360.2,390.8 369.3,375.6"/></clipPath><g clip-path="url(#cap)"><rect x="335" y="360" width="100" height="130" fill="#12c8e6"/><polygon points="386,371.9 399.7,368.1 411.8,372.6 419.4,381.7 423.1,396.9 422.4,403 407.2,392.3 404.2,387.8 396.6,378.7 388.3,372.6" fill="#14eeb2"/><polygon points="392,400 404,390 408,395 398,420 392,428 385,430 388,412" fill="#26def8" fill-opacity="0.8"/><polygon points="335,412.8 352.7,412.8 376.9,422.6 381.5,436.3 392.1,427.2 414.8,436.3 430,440 430,500 335,500" fill="#1a7cf0"/><polygon points="335,443.8 361.8,460.5 360.2,490 335,490" fill="#1414ec"/><polygon points="378,461 399.7,454.5 410,456 430,450 430,490 370,490" fill="#1616ee"/><polygon points="360,478 374,460 390,440 394,445 380,470 372,484" fill="#60d8ff" fill-opacity="0.85"/><polygon points="362,482 372,470 376,484" fill="#5a6af0"/></g><polygon points="378.4,368.1 386.0,371.9 399.7,368.1 411.8,372.6 419.4,381.7 423.1,396.9 422.4,406.0 414.1,437.0 412.6,441.0 409.0,455.0 403.3,464.0 395.0,472.0 385.0,478.0 375.8,481.5 364.0,480.5 355.0,476.0 348.3,471.0 343.0,463.0 340.5,452.6 341.0,445.0 342.8,434.7 352.7,412.8 360.2,390.8 369.3,375.6" fill="none" stroke="#333" stroke-opacity="0.35" stroke-width="0.6"/><clipPath id="c2"><polygon points="378.4,368.1 386.0,371.9 399.7,368.1 411.8,372.6 419.4,381.7 423.1,396.9 422.4,406.0 414.1,437.0 412.6,441.0 409.0,455.0 403.3,458.0 395.0,458.0 385.0,458.0 375.8,458.0 364.0,458.0 355.0,458.0 348.3,458.0 343.0,458.0 340.5,452.6 341.0,445.0 342.8,434.7 352.7,412.8 360.2,390.8 369.3,375.6"/></clipPath><path clip-path="url(#c2)" d="M304.1 202.8L555.9 299.5M293.7 229.9L545.5 326.5M283.3 257.0L535.1 353.6M272.9 284.0L524.7 380.7M262.5 311.1L514.3 407.8M252.1 338.2L503.9 434.8M241.7 365.2L493.5 461.9M231.3 392.3L483.1 489.0M220.9 419.4L472.7 516.0M210.5 446.5L462.3 543.1M200.1 473.5L451.9 570.2M561.7 312.6L465.0 564.4M534.6 302.2L438.0 554.0M507.5 291.8L410.9 543.6M480.5 281.4L383.8 533.2M453.4 271.0L356.7 522.8M426.3 260.6L329.7 512.4M399.3 250.2L302.6 502.0M372.2 239.8L275.5 491.6M345.1 229.4L248.5 481.2M318.0 219.0L221.4 470.8M291.0 208.6L194.3 460.4" stroke="#000" stroke-opacity="0.5" stroke-width="0.7" fill="none"/><polygon points="529.7,490.7 536.0,493.5 559.0,494.5 576.0,489.5 586.5,479.0 591.5,465.0 591.0,452.0 588.0,440.0 586.6,438.5 597.0,447.1 608.4,462.2 621.7,485.0 628.3,515.3 635.0,515.3 635.0,538.1 628.3,551.3 616.0,564.6 600.8,574.1 581.9,576.9 562.9,572.2 549.6,562.7 539.2,547.5 534.5,524.8 531.6,502.0" fill="#1283ee" stroke="#111" stroke-opacity="0.7" stroke-width="0.8"/><polyline points="594.0,450.0 603.0,464.0 615.0,487.0 621.0,514.0 628.0,520.0 628.0,537.0 622.0,548.0 611.0,559.0 598.0,567.0 582.0,570.0 565.0,566.0 554.0,558.0 545.0,545.0 540.0,524.0 537.0,503.0 535.0,494.0" fill="none" stroke="#111" stroke-opacity="0.6" stroke-width="0.7"/><clipPath id="c3"><polygon points="529.7,490.7 536.0,493.5 559.0,494.5 576.0,489.5 586.5,479.0 591.5,465.0 591.0,452.0 588.0,440.0 586.6,438.5 597.0,447.1 608.4,462.2 621.7,485.0 628.3,515.3 635.0,515.3 635.0,538.1 628.3,551.3 616.0,564.6 600.8,574.1 581.9,576.9 562.9,572.2 549.6,562.7 539.2,547.5 534.5,524.8 531.6,502.0"/></clipPath><path clip-path="url(#c3)" d="M332.2 409.3L735.1 308.9M336.8 427.7L739.7 327.3M341.4 446.2L744.3 345.7M346.0 464.6L748.9 364.2M350.6 483.0L753.5 382.6M355.2 501.5L758.0 401.0M359.8 519.9L762.6 419.5M364.4 538.4L767.2 437.9M369.0 556.8L771.8 456.3M373.6 575.2L776.4 474.8M378.2 593.7L781.0 493.2M382.8 612.1L785.6 511.6M387.4 630.5L790.2 530.1M392.0 649.0L794.8 548.5M396.5 667.4L799.4 567.0M401.1 685.8L804.0 585.4M405.7 704.3L808.6 603.8M410.3 722.7L813.2 622.3M414.9 741.1L817.8 640.7M690.7 282.2L791.1 685.1M672.3 286.8L772.7 689.7M653.8 291.4L754.3 694.3M635.4 296.0L735.8 698.9M617.0 300.6L717.4 703.5M598.5 305.2L699.0 708.0M580.1 309.8L680.5 712.6M561.6 314.4L662.1 717.2M543.2 319.0L643.7 721.8M524.8 323.6L625.2 726.4M506.3 328.2L606.8 731.0M487.9 332.8L588.4 735.6M469.5 337.4L569.9 740.2M451.0 342.0L551.5 744.8M432.6 346.5L533.0 749.4M414.2 351.1L514.6 754.0M395.7 355.7L496.2 758.6M377.3 360.3L477.7 763.2M358.9 364.9L459.3 767.8" stroke="#000" stroke-opacity="0.6" stroke-width="0.7" fill="none"/><polygon points="504.9,400.1 508.8,404.6 517.7,409.1 534.4,416.2 555.0,418.7 570.4,428.4 583.0,440.5 588.5,451.5 589.5,464.5 585.0,478.0 575.0,488.0 558.5,493.0 537.0,492.5 531.9,487.0 521.6,470.7 508.8,456.6 493.4,445.0 494.6,427.1 503.6,404.0" fill="#12e89e" stroke="#222" stroke-opacity="0.7" stroke-width="0.8"/><polygon points="507.0,409.0 517.0,413.0 533.0,420.0 554.0,423.0 567.0,432.0 577.0,444.0 582.0,453.0 583.0,464.0 578.0,475.0 570.0,483.0 556.0,487.0 540.0,487.0 536.0,483.0 525.0,468.0 511.0,453.0 498.0,443.0 499.0,428.0 505.0,412.0" fill="none" stroke="#222" stroke-opacity="0.6" stroke-width="0.7"/><clipPath id="c4"><polygon points="504.9,400.1 508.8,404.6 517.7,409.1 534.4,416.2 555.0,418.7 570.4,428.4 583.0,440.5 588.5,451.5 589.5,464.5 585.0,478.0 575.0,488.0 558.5,493.0 537.0,492.5 531.9,487.0 521.6,470.7 508.8,456.6 493.4,445.0 494.6,427.1 503.6,404.0"/></clipPath><path clip-path="url(#c4)" d="M514.0 256.6L717.8 460.4M504.4 266.1L708.3 470.0M494.9 275.6L698.8 479.5M485.3 285.2L689.2 489.1M475.8 294.7L679.7 498.6M466.3 304.3L670.1 508.1M456.7 313.8L660.6 517.7M447.2 323.4L651.0 527.2M437.6 332.9L641.5 536.8M428.1 342.5L631.9 546.3M418.5 352.0L622.4 555.9M409.0 361.6L612.8 565.4M399.4 371.1L603.3 575.0M389.9 380.7L593.7 584.5M380.3 390.2L584.2 594.1M370.8 399.7L574.7 603.6M361.2 409.3L565.1 613.2M351.7 418.8L555.6 622.7M342.2 428.4L546.0 632.2M717.8 428.4L514.0 632.2M708.3 418.8L504.4 622.7M698.8 409.3L494.9 613.2M689.2 399.7L485.3 603.6M679.7 390.2L475.8 594.1M670.1 380.7L466.3 584.5M660.6 371.1L456.7 575.0M651.0 361.6L447.2 565.4M641.5 352.0L437.6 555.9M631.9 342.5L428.1 546.3M622.4 332.9L418.5 536.8M612.8 323.4L409.0 527.2M603.3 313.8L399.4 517.7M593.7 304.3L389.9 508.1M584.2 294.7L380.3 498.6M574.7 285.2L370.8 489.1M565.1 275.6L361.2 479.5M555.6 266.1L351.7 470.0M546.0 256.6L342.2 460.4" stroke="#000" stroke-opacity="0.6" stroke-width="0.7" fill="none"/><clipPath id="hd"><polygon points="471.2,408.7 484.0,400.4 493.4,398.8 504.2,399.1 509.0,402.0 492.0,446.5 476.7,448.1 466.6,438.0 465.1,423.9 469.0,415.5"/></clipPath><g clip-path="url(#hd)"><rect x="460" y="395" width="55" height="60" fill="#14d8f8"/><polygon points="460,424 493.2,417 500,420 484,450 460,452" fill="#1a88ee"/><polygon points="460,437 482.2,436.2 478,452 460,452" fill="#1414e6"/><polygon points="493.5,416 497.5,411 482,449 476.5,449" fill="#1a5af0"/><polygon points="497.5,411 503.3,399 507,399.5 488,448 482,449" fill="#18b4dc"/><polygon points="503.3,399 510,401 493,447 488,448" fill="#16cfb4"/></g><polygon points="471.2,408.7 484.0,400.4 493.4,398.8 504.2,399.1 509.0,402.0 492.0,446.5 476.7,448.1 466.6,438.0 465.1,423.9 469.0,415.5" fill="none" stroke="#333" stroke-opacity="0.3" stroke-width="0.6"/><path d="M530.6 491 L536 493.5 L559 494 L576 489 L586.5 478.5 L591 465 L590.5 452 L587 439" fill="none" stroke="#0a2030" stroke-width="1.8" stroke-linejoin="round"/><path d="M533 490 L537 491.5 L558 492 L574.5 487 L584.5 477 L588.8 464.5 L588.3 452 L585.5 441" fill="none" stroke="#18c8d0" stroke-width="1" stroke-linejoin="round"/><polygon points="649.6,367.1 660.8,370.2 688.6,380.4 726.5,423.5 747.1,464.6 747.1,524.1 710.1,528.2 693.7,497.4 669.1,460.5 647.5,435.9 636.2,429.7 630.1,424.6 640.3,394.8" fill="#18b8c0" stroke="#222" stroke-opacity="0.4" stroke-width="0.7"/><polygon points="650.9,369.6 661.6,372.6 688.1,382.6 725.1,424.9 745.9,464.9 746.0,523.1 710.6,527.1 694.2,497.0 669.6,460.1 648.3,435.3 637.7,429.6 632.0,424.8 641.7,395.9" fill="#18a8dc" stroke="#222" stroke-opacity="0.4" stroke-width="0.7"/><polygon points="652.8,373.4 662.6,376.1 687.4,385.8 723.0,426.9 744.0,465.3 744.4,521.7 711.5,525.5 695.1,496.4 670.5,459.5 649.4,434.5 639.9,429.4 634.8,425.1 643.7,397.5" fill="#1a80e6" stroke="#222" stroke-opacity="0.4" stroke-width="0.7"/><polygon points="655.0,377.7 663.9,380.2 686.6,389.6 720.5,429.2 741.9,465.7 742.5,520.1 712.4,523.6 696.0,495.7 671.4,458.8 650.7,433.6 642.5,429.1 638.1,425.4 646.0,399.4" fill="#1a50ee" stroke="#222" stroke-opacity="0.4" stroke-width="0.7"/><polygon points="657.5,382.5 665.3,384.7 685.7,393.8 717.8,431.8 739.6,466.3 740.4,518.3 713.4,521.5 697.0,494.9 672.4,458.0 652.1,432.5 645.4,428.8 641.8,425.8 648.6,401.5" fill="#1a2cee" stroke="#222" stroke-opacity="0.4" stroke-width="0.7"/><polygon points="660.2,387.7 666.9,389.6 684.7,398.3 714.8,434.6 737.1,466.8 738.1,516.3 714.6,519.3 698.2,494.1 673.6,457.1 653.6,431.4 648.5,428.6 645.7,426.2 651.4,403.7" fill="#1a16e6" stroke="#222" stroke-opacity="0.4" stroke-width="0.7"/><polygon points="663.0,393.2 668.5,394.8 683.6,403.0 711.7,437.6 734.4,467.4 735.7,514.3 715.7,516.9 699.3,493.2 674.7,456.2 655.3,430.2 651.7,428.3 649.8,426.7 654.4,406.1" fill="#3012dc" stroke="#222" stroke-opacity="0.4" stroke-width="0.7"/><polygon points="666.0,399.0 670.2,400.3 682.5,408.1 708.4,440.7 731.5,468.0 733.2,512.1 717.0,514.4 700.6,492.3 676.0,455.3 657.0,428.9 655.2,427.9 654.2,427.1 657.5,408.6" fill="#6010dc" stroke="#222" stroke-opacity="0.4" stroke-width="0.7"/><polygon points="669.1,405.1 672.0,406.0 681.4,413.3 705.0,444.0 728.6,468.7 730.6,509.8 718.3,511.8 701.9,491.3 677.3,454.3 658.8,427.6 658.8,427.6 658.8,427.6 660.8,411.2" fill="#a010f0" stroke="#222" stroke-opacity="0.4" stroke-width="0.7"/><polygon points="649,367 661,370 646,385 638,420 630,424 640,395" fill="#18c8e0"/><polygon points="672,392 690,395 705,430 712,445 700,440 688,420" fill="#4a14f0" fill-opacity="0.8"/><clipPath id="c5"><polygon points="649.6,367.1 660.8,370.2 688.6,380.4 726.5,423.5 747.1,464.6 747.1,524.1 710.1,528.2 693.7,497.4 669.1,460.5 647.5,435.9 636.2,429.7 630.1,424.6 640.3,394.8"/></clipPath><path clip-path="url(#c5)" d="M745.5 154.7L987.1 573.3M731.6 162.7L973.2 581.3M717.7 170.7L959.4 589.3M703.9 178.7L945.5 597.3M690.0 186.7L931.7 605.3M676.2 194.7L917.8 613.3M662.3 202.7L904.0 621.3M648.5 210.7L890.1 629.3M634.6 218.7L876.3 637.3M620.7 226.7L862.4 645.3M606.9 234.7L848.5 653.3M593.0 242.7L834.7 661.3M579.2 250.7L820.8 669.3M565.3 258.7L807.0 677.3M551.5 266.7L793.1 685.3M537.6 274.7L779.3 693.3M523.7 282.7L765.4 701.3M509.9 290.7L751.5 709.3M496.0 298.7L737.7 717.3M482.2 306.7L723.8 725.3M468.3 314.7L710.0 733.3M454.5 322.7L696.1 741.3M440.6 330.7L682.3 749.3M426.8 338.7L668.4 757.3M412.9 346.7L654.5 765.3M1005.3 505.5L586.7 747.1M997.3 491.6L578.7 733.2M989.3 477.7L570.7 719.4M981.3 463.9L562.7 705.5M973.3 450.0L554.7 691.7M965.3 436.2L546.7 677.8M957.3 422.3L538.7 664.0M949.3 408.5L530.7 650.1M941.3 394.6L522.7 636.3M933.3 380.7L514.7 622.4M925.3 366.9L506.7 608.5M917.3 353.0L498.7 594.7M909.3 339.2L490.7 580.8M901.3 325.3L482.7 567.0M893.3 311.5L474.7 553.1M885.3 297.6L466.7 539.3M877.3 283.7L458.7 525.4M869.3 269.9L450.7 511.5M861.3 256.0L442.7 497.7M853.3 242.2L434.7 483.8M845.3 228.3L426.7 470.0M837.3 214.5L418.7 456.1M829.3 200.6L410.7 442.3M821.3 186.8L402.7 428.4M813.3 172.9L394.7 414.5" stroke="#000" stroke-opacity="0.45" stroke-width="0.7" fill="none"/><polygon points="758.9,542.2 779.3,528.1 801.4,513.9 817.4,516.5 835.1,521.8 840.5,547.6 849.3,568.9 861.7,597.2 865.3,615.0 861.7,641.6 836.9,638.0 803.2,636.3 771.3,635.4 764.2,593.7" fill="#1a86e6" stroke="#222" stroke-opacity="0.4" stroke-width="0.7"/><polygon points="762.3,543.2 781.3,530.0 802.3,516.8 817.5,518.8 834.4,523.2 839.6,548.9 848.1,569.7 859.7,596.3 863.3,613.8 859.5,638.1 834.9,634.2 803.6,632.9 774.0,632.4 767.1,591.5" fill="#1a30f0" stroke="#222" stroke-opacity="0.4" stroke-width="0.7"/><polygon points="765.7,544.2 783.2,531.8 803.2,519.6 817.5,521.1 833.8,524.7 838.7,550.2 847.0,570.4 857.8,595.4 861.3,612.5 857.3,634.5 832.9,630.5 803.9,629.5 776.6,629.4 770.0,589.2" fill="#2418ec" stroke="#222" stroke-opacity="0.4" stroke-width="0.7"/><polygon points="769.1,545.1 785.2,533.7 804.1,522.5 817.6,523.4 833.1,526.1 837.8,551.6 845.8,571.2 855.8,594.5 859.3,611.2 855.1,631.0 830.9,626.7 804.2,626.1 779.3,626.4 772.8,587.0" fill="#4012e4" stroke="#222" stroke-opacity="0.4" stroke-width="0.7"/><polygon points="772.5,546.1 787.1,535.5 805.0,525.4 817.7,525.8 832.5,527.6 837.0,552.9 844.6,572.0 853.9,593.6 857.3,610.0 852.9,627.4 829.0,623.0 804.6,622.6 782.0,623.4 775.7,584.8" fill="#6410dc" stroke="#222" stroke-opacity="0.4" stroke-width="0.7"/><polygon points="775.8,547.1 789.1,537.4 805.8,528.3 817.8,528.1 831.8,529.0 836.1,554.2 843.5,572.7 851.9,592.7 855.3,608.8 850.6,623.9 827.0,619.2 805.0,619.2 784.6,620.4 778.6,582.6" fill="#9010d8" stroke="#222" stroke-opacity="0.4" stroke-width="0.7"/><polygon points="779.2,548.0 791.1,539.3 806.7,531.1 817.9,530.4 831.1,530.5 835.2,555.6 842.3,573.5 849.9,591.8 853.3,607.5 848.4,620.3 825.0,615.4 805.3,615.8 787.3,617.4 781.5,580.4" fill="#b810c8" stroke="#222" stroke-opacity="0.4" stroke-width="0.7"/><polygon points="782.6,549.0 793.0,541.1 807.6,534.0 817.9,532.7 830.5,531.9 834.3,556.9 841.2,574.2 848.0,590.9 851.3,606.2 846.2,616.8 823.0,611.7 805.6,612.4 789.9,614.4 784.3,578.1" fill="#c8107a" stroke="#222" stroke-opacity="0.4" stroke-width="0.7"/><polygon points="786.0,550.0 795.0,543.0 808.5,536.9 818.0,535.0 829.8,533.4 833.4,558.2 840.0,575.0 846.0,590.0 849.3,605.0 844.0,613.2 821.0,607.9 806.0,609.0 792.6,611.4 787.2,575.9" fill="#ee1078" stroke="#222" stroke-opacity="0.4" stroke-width="0.7"/><polygon points="836,562 846,580 856,603 862,622 850,620 840,585" fill="#e010e0" fill-opacity="0.75"/><polygon points="800,636 862,641 861,632 830,628" fill="#2a1af0" fill-opacity="0.8"/><clipPath id="c6"><polygon points="758.9,542.2 779.3,528.1 801.4,513.9 817.4,516.5 835.1,521.8 840.5,547.6 849.3,568.9 861.7,597.2 865.3,615.0 861.7,641.6 836.9,638.0 803.2,636.3 771.3,635.4 764.2,593.7"/></clipPath><path clip-path="url(#c6)" d="M608.5 442.9L989.5 402.8M610.3 459.8L991.3 419.7M612.1 476.7L993.1 436.6M613.8 493.6L994.8 453.5M615.6 510.5L996.6 470.4M617.4 527.4L998.4 487.4M619.2 544.3L1000.2 504.3M620.9 561.2L1001.9 521.2M622.7 578.1L1003.7 538.1M624.5 595.0L1005.5 555.0M626.3 611.9L1007.3 571.9M628.1 628.8L1009.1 588.8M629.8 645.7L1010.8 605.7M631.6 662.6L1012.6 622.6M633.4 679.6L1014.4 639.5M635.2 696.5L1016.2 656.4M636.9 713.4L1017.9 673.3M638.7 730.3L1019.7 690.2M640.5 747.2L1021.5 707.1M947.1 368.5L987.2 749.5M930.2 370.3L970.3 751.3M913.3 372.1L953.4 753.1M896.4 373.8L936.5 754.8M879.5 375.6L919.6 756.6M862.6 377.4L902.6 758.4M845.7 379.2L885.7 760.2M828.8 380.9L868.8 761.9M811.9 382.7L851.9 763.7M795.0 384.5L835.0 765.5M778.1 386.3L818.1 767.3M761.2 388.1L801.2 769.1M744.3 389.8L784.3 770.8M727.4 391.6L767.4 772.6M710.4 393.4L750.5 774.4M693.5 395.2L733.6 776.2M676.6 396.9L716.7 777.9M659.7 398.7L699.8 779.7M642.8 400.5L682.9 781.5" stroke="#000" stroke-opacity="0.45" stroke-width="0.7" fill="none"/><polygon points="697.1,652.6 726.9,650.5 726.0,657.2 735.0,663.5 745.8,677.9 748.5,694.2 742.2,712.2 731.4,723.0 713.3,726.3 697.1,717.6 686.2,703.2 682.6,677.9" fill="#1250f0" stroke="#111" stroke-opacity="0.7" stroke-width="0.8"/><polygon points="700.0,658.0 722.0,656.0 732.0,668.0 742.0,680.0 744.0,695.0 738.0,710.0 728.0,719.0 713.0,721.0 700.0,713.0 690.0,700.0 687.0,680.0" fill="none" stroke="#111" stroke-opacity="0.55" stroke-width="0.7"/><clipPath id="c7"><polygon points="697.1,652.6 726.9,650.5 726.0,657.2 735.0,663.5 745.8,677.9 748.5,694.2 742.2,712.2 731.4,723.0 713.3,726.3 697.1,717.6 686.2,703.2 682.6,677.9"/></clipPath><path clip-path="url(#c7)" d="M704.7 537.5L865.5 698.3M692.7 549.5L853.5 710.3M680.7 561.5L841.5 722.3M668.7 573.5L829.5 734.3M656.6 585.6L817.4 746.4M644.6 597.6L805.4 758.4M632.6 609.6L793.4 770.4M620.6 621.6L781.4 782.4M608.6 633.6L769.4 794.4M596.5 645.7L757.3 806.5M584.5 657.7L745.3 818.5M572.5 669.7L733.3 830.5M560.5 681.7L721.3 842.5M865.5 681.7L704.7 842.5M853.5 669.7L692.7 830.5M841.5 657.7L680.7 818.5M829.5 645.7L668.7 806.5M817.4 633.6L656.6 794.4M805.4 621.6L644.6 782.4M793.4 609.6L632.6 770.4M781.4 597.6L620.6 758.4M769.4 585.6L608.6 746.4M757.3 573.5L596.5 734.3M745.3 561.5L584.5 722.3M733.3 549.5L572.5 710.3M721.3 537.5L560.5 698.3" stroke="#000" stroke-opacity="0.6" stroke-width="0.7" fill="none"/><polygon points="772.9,659.0 823.5,658.1 886.6,664.4 883.9,744.7 875.8,753.7 837.9,757.4 789.2,756.4 771.1,744.7 763.0,741.1 763.9,717.6 771.1,714.0" fill="#2020f0" stroke="#222" stroke-opacity="0.4" stroke-width="0.7"/><polygon points="775.0,661.4 824.4,660.7 884.3,666.2 881.7,745.0 874.4,752.7 837.9,755.5 790.0,753.8 773.2,743.2 766.1,739.8 766.9,717.9 773.2,714.3" fill="#3016ec" stroke="#222" stroke-opacity="0.4" stroke-width="0.7"/><polygon points="777.0,663.9 825.4,663.4 882.0,668.0 879.5,745.2 873.0,751.8 837.9,753.6 790.9,751.1 775.2,741.6 769.3,738.5 769.9,718.3 775.4,714.6" fill="#4a12e4" stroke="#222" stroke-opacity="0.4" stroke-width="0.7"/><polygon points="779.1,666.3 826.3,666.0 879.7,669.8 877.3,745.5 871.6,750.8 837.9,751.7 791.7,748.5 777.3,740.1 772.4,737.2 772.9,718.6 777.5,714.9" fill="#6a10e0" stroke="#222" stroke-opacity="0.4" stroke-width="0.7"/><polygon points="781.1,668.8 827.2,668.6 877.3,671.6 875.2,745.7 870.2,749.9 838.0,749.7 792.5,745.9 779.3,738.5 775.6,735.9 776.0,719.0 779.6,715.1" fill="#8c10dc" stroke="#222" stroke-opacity="0.4" stroke-width="0.7"/><polygon points="783.2,671.2 828.1,671.2 875.0,673.4 873.0,746.0 868.8,748.9 838.0,747.8 793.3,743.3 781.4,737.0 778.7,734.6 779.0,719.3 781.7,715.4" fill="#b010d8" stroke="#222" stroke-opacity="0.4" stroke-width="0.7"/><polygon points="785.2,673.7 829.1,673.9 872.7,675.2 870.8,746.2 867.4,748.0 838.0,745.9 794.2,740.6 783.4,735.4 781.9,733.3 782.0,719.7 783.9,715.7" fill="#d010e0" stroke="#222" stroke-opacity="0.4" stroke-width="0.7"/><polygon points="787.3,676.1 830.0,676.5 870.4,677.0 868.6,746.5 866.0,747.0 838.0,744.0 795.0,738.0 785.5,733.9 785.0,732.0 785.0,720.0 786.0,716.0" fill="#f012e6" stroke="#222" stroke-opacity="0.4" stroke-width="0.7"/><polygon points="795,735 870,740 868,746 800,742" fill="#e010e0" fill-opacity="0.6"/><polygon points="764,718 772,714 778,735 790,748 789,756 771,745 763,741" fill="#6010e8" fill-opacity="0.8"/><clipPath id="c8"><polygon points="772.9,659.0 823.5,658.1 886.6,664.4 883.9,744.7 875.8,753.7 837.9,757.4 789.2,756.4 771.1,744.7 763.0,741.1 763.9,717.6 771.1,714.0"/></clipPath><path clip-path="url(#c8)" d="M639.6 542.5L1010.4 542.5M639.6 560.0L1010.4 560.0M639.6 577.5L1010.4 577.5M639.6 595.0L1010.4 595.0M639.6 612.5L1010.4 612.5M639.6 630.0L1010.4 630.0M639.6 647.5L1010.4 647.5M639.6 665.0L1010.4 665.0M639.6 682.5L1010.4 682.5M639.6 700.0L1010.4 700.0M639.6 717.5L1010.4 717.5M639.6 735.0L1010.4 735.0M639.6 752.5L1010.4 752.5M639.6 770.0L1010.4 770.0M639.6 787.5L1010.4 787.5M639.6 805.0L1010.4 805.0M639.6 822.5L1010.4 822.5M639.6 840.0L1010.4 840.0M639.6 857.5L1010.4 857.5M982.5 514.6L982.5 885.4M965.0 514.6L965.0 885.4M947.5 514.6L947.5 885.4M930.0 514.6L930.0 885.4M912.5 514.6L912.5 885.4M895.0 514.6L895.0 885.4M877.5 514.6L877.5 885.4M860.0 514.6L860.0 885.4M842.5 514.6L842.5 885.4M825.0 514.6L825.0 885.4M807.5 514.6L807.5 885.4M790.0 514.6L790.0 885.4M772.5 514.6L772.5 885.4M755.0 514.6L755.0 885.4M737.5 514.6L737.5 885.4M720.0 514.6L720.0 885.4M702.5 514.6L702.5 885.4M685.0 514.6L685.0 885.4M667.5 514.6L667.5 885.4" stroke="#000" stroke-opacity="0.5" stroke-width="0.7" fill="none"/><defs><linearGradient id="gy" x1="0" y1="0" x2="1" y2="0"><stop offset="0" stop-color="#b8ee50"/><stop offset="1" stop-color="#2e8a1a"/></linearGradient><linearGradient id="gx" x1="0" y1="0" x2="0" y2="1"><stop offset="0" stop-color="#7a1a00"/><stop offset="0.6" stop-color="#f04010"/><stop offset="1" stop-color="#ff6020"/></linearGradient><linearGradient id="gg" x1="0" y1="0" x2="0" y2="1"><stop offset="0" stop-color="#888"/><stop offset="1" stop-color="#2a2a2a"/></linearGradient><linearGradient id="gg2" x1="0" y1="0" x2="1" y2="0"><stop offset="0" stop-color="#2a2a2a"/><stop offset="0.5" stop-color="#777"/><stop offset="1" stop-color="#2a2a2a"/></linearGradient><radialGradient id="sun" cx="50%" cy="50%" r="50%"><stop offset="0" stop-color="#fff27a"/><stop offset="1" stop-color="#f2c20c"/></radialGradient></defs><polygon points="876.6,231.5 891.1,231.5 884.1,249.5" fill="url(#gy)"/><rect x="872.5" y="254" width="22.3" height="22.2" fill="#c4c4c4"/><circle cx="883.9" cy="264.8" r="7" fill="#2b3c64"/><path d="M880.5 261.5h6.5l-6.5 6.8h6.8" fill="none" stroke="#e0b878" stroke-width="1.5"/><polygon points="849.9,257.6 849.9,272.7 868.5,264.8" fill="url(#gg)"/><polygon points="917.8,257.6 917.8,272.7 899.2,264.8" fill="url(#gx)"/><polygon points="884.1,280.3 876.6,298.8 891.7,298.8" fill="url(#gg2)"/><text x="884" y="229" font-family="Liberation Sans" font-weight="bold" font-size="10" text-anchor="middle" fill="#000">Y</text><text x="924" y="269.5" font-family="Liberation Sans" font-weight="bold" font-size="10" text-anchor="middle" fill="#000">X</text><clipPath id="vpc"><rect x="233" y="215.5" width="700.5" height="560"/></clipPath><g clip-path="url(#vpc)"><polygon points="947.8,226.1 937.5,227.9 943.3,236.5 933.5,233.0 934.2,243.4 927.5,235.4 922.9,244.8 921.1,234.5 912.5,240.3 916.0,230.5 905.6,231.2 913.6,224.5 904.2,219.9 914.5,218.1 908.7,209.5 918.5,213.0 917.8,202.6 924.5,210.6 929.1,201.2 930.9,211.5 939.5,205.7 936.0,215.5 946.4,214.8 938.4,221.5" fill="#f6d21a"/><circle cx="926" cy="223" r="11.5" fill="url(#sun)"/></g><rect x="407.8" y="740.5" width="349.7" height="10.5" fill="#fff" stroke="#000" stroke-width="1"/><rect x="407.8" y="746" width="87.19999999999999" height="4.5" fill="#6c6c6c"/><rect x="495" y="741" width="87.29999999999995" height="5" fill="#6c6c6c"/><rect x="582.3" y="746" width="87.60000000000002" height="4.5" fill="#6c6c6c"/><rect x="669.9" y="741" width="87.60000000000002" height="5" fill="#6c6c6c"/><text x="408.3" y="739" font-family="Liberation Sans" font-size="12" text-anchor="middle" fill="#000">0</text><text x="495.5" y="739" font-family="Liberation Sans" font-size="12" text-anchor="middle" fill="#000">500</text><text x="582.8" y="739" font-family="Liberation Sans" font-size="12" text-anchor="middle" fill="#000">1000</text><text x="670.4" y="739" font-family="Liberation Sans" font-size="12" text-anchor="middle" fill="#000">1500</text><text x="758.0" y="739" font-family="Liberation Sans" font-size="12" text-anchor="middle" fill="#000">2000</text><text x="763.8" y="739" font-family="Liberation Sans" font-size="12" fill="#e8e020">0</text><path d="M540.5 503.5v16l3.8-3.6 2.6 5.8 2.4-1.1-2.6-5.6h5.3z" fill="#fff" stroke="#000" stroke-width="1"/></svg>
<div class="a" style="left:236px;top:215px;width:698px;height:1px;background:repeating-linear-gradient(90deg,#000 0 5px,transparent 5px 8px)"></div>
<div class="a" style="left:232px;top:216px;width:1px;height:560px;background:repeating-linear-gradient(#000 0 5px,transparent 5px 8px)"></div>
<div class="a" style="left:933px;top:216px;width:1px;height:560px;background:repeating-linear-gradient(#000 0 5px,transparent 5px 8px)"></div>
<div class="a" style="left:236px;top:775px;width:698px;height:1px;background:repeating-linear-gradient(90deg,#000 0 5px,transparent 5px 8px)"></div>
<div class="a" style="left:903px;top:215px;width:31px;height:1px;background:repeating-linear-gradient(90deg,#1a3cf0 0 4px,transparent 4px 6px)"></div>
<div class="a" style="left:933px;top:215px;width:1px;height:30px;background:repeating-linear-gradient(#1a3cf0 0 4px,transparent 4px 6px)"></div>
<div class="t" style="left:235px;top:765px;font-size:8px;font-weight:bold;color:#5a5a5a;letter-spacing:0.75px">588 fps | 1.700 ms/f</div>
<div class="t" style="left:500px;top:765px;width:434px;text-align:right;font-size:8px;font-weight:bold;color:#5a5a5a;letter-spacing:0.6px">NVIDIA Corporation GeForce GTX 970M/PCIe/SSE2 | OpenGL v4.6.0 NVIDIA 419.17</div>
<div class="a" style="left:232px;top:776.5px;width:703px;height:34.5px;border:4px solid #ff0000;border-radius:6px;background:#e9eaef"></div>
<div class="t" style="left:238.5px;top:789px;font-size:11.2px;color:#1c1c3a">(2294.7, 1154.4, 820.0) OpenPit/M1/P1/P102/816/9/37 <b>&lt;Record Name&gt;:</b> OpenPit/M1/P1/P102/816/9/37</div>
<div class="a" style="left:820px;top:784px;width:33px;height:21px;border:1px solid #bcbfc8;border-radius:3px;background:linear-gradient(#f3f4f6,#e1e3e8)"></div>
<svg style="left:823px;top:786px" width="28" height="18"><defs><radialGradient id="gl" cx="40%" cy="35%" r="65%"><stop offset="0" stop-color="#bfe8ff"/><stop offset="1" stop-color="#2a78c8"/></radialGradient></defs><circle cx="8" cy="8" r="6.5" fill="url(#gl)" stroke="#2a5a9a" stroke-width="0.8"/><path d="M4 4q3 2 1 5q3 1 3 4M10 2q-1 3 2 4" fill="none" stroke="#4a9a3a" stroke-width="1.4"/><ellipse cx="11" cy="12.5" rx="5" ry="3" fill="#fff" stroke="#333" stroke-width="0.8"/><circle cx="11" cy="12.5" r="1.4" fill="#333"/><path d="M21 8h6l-3 3z" fill="#8b8f9c"/></svg>
<div class="a" style="left:857px;top:784px;width:73px;height:21px;border:1px solid #bcbfc8;border-radius:3px;background:linear-gradient(#f3f4f6,#e1e3e8)"></div>
<svg style="left:861px;top:786px" width="17" height="16"><rect x="0.5" y="0.5" width="15" height="15" fill="#f8e890" stroke="#8aa878"/><rect x="1" y="1" width="14" height="4.5" fill="#6cc888"/><rect x="1" y="5.5" width="14" height="5" fill="#a8dc8c"/><rect x="1" y="10.5" width="14" height="4.5" fill="#f8e08a"/></svg>
<div class="t" style="left:880px;top:787.5px;font-size:11px;color:#1c1c3a">Legend</div>
<svg style="left:919px;top:792px" width="8" height="5"><path d="M0.5 0.5h7l-3.5 4z" fill="#8b8f9c"/></svg>
<div class="a" style="left:943px;top:102px;width:44px;height:27px;border:1px solid #b7bac3;border-radius:3px;background:linear-gradient(#f4f5f7,#e2e4e9)"></div>
<div class="a" style="left:971px;top:103px;width:1px;height:25px;background:#c4c7cf"></div>
<svg style="left:976px;top:113px" width="9" height="5"><path d="M0 0h8l-4 4z" fill="#8b8f9c"/></svg>
<svg style="left:949px;top:108px" width="15" height="15"><rect x="0.5" y="0.5" width="14" height="14" fill="#fff" stroke="#3a5a98"/><rect x="0.5" y="0.5" width="14" height="3.5" fill="#5a7ac0"/><rect x="10" y="4.5" width="3.5" height="3.5" fill="#3a5a98"/><path d="M2.5 6.5h6M2.5 9h10M2.5 11.5h10" stroke="#3a5a98" stroke-width="1"/></svg>
<div class="a" style="left:993px;top:105px;width:221px;height:22px;background:#fff;border:1px solid #c9ccd4"></div>
<div class="t" style="left:998px;top:110px;font-size:11.5px"><span class="lb">Parcel Subset:</span> <span class="cy">&lt;All Parcels&gt;</span></div>
<svg style="left:1182px;top:114px" width="8" height="5"><path d="M0.5 0.5h7l-3.5 4z" fill="#1e1e2a"/></svg>
<svg style="left:1197px;top:109px" width="14" height="14" viewBox="0 0 14 14"><defs><linearGradient id="gr" x1="0" y1="0" x2="0" y2="1"><stop offset="0" stop-color="#eef1f7"/><stop offset="1" stop-color="#a2abc2"/></linearGradient></defs><path d="M6 0.5h2l.4 1.8 1.3.6 1.6-1 1.4 1.4-1 1.6.6 1.3 1.8.4v2l-1.8.4-.6 1.3 1 1.6-1.4 1.4-1.6-1-1.3.6L8 13.5H6l-.4-1.8-1.3-.6-1.6 1-1.4-1.4 1-1.6-.6-1.3L.5 8V6l1.8-.4.6-1.3-1-1.6 1.4-1.4 1.6 1 1.3-.6z" fill="url(#gr)" stroke="#3e4662" stroke-width="1"/><circle cx="7" cy="7" r="1.6" fill="#f4f6fa" stroke="#3e4662" stroke-width="1"/></svg>
<div class="a" style="left:1220px;top:102px;width:40px;height:27px;border:1px solid #b7bac3;border-radius:3px;background:linear-gradient(#f4f5f7,#e2e4e9)"></div>
<div class="a" style="left:1243px;top:103px;width:1px;height:25px;background:#c4c7cf"></div>
<svg style="left:1248px;top:113px" width="9" height="5"><path d="M0 0h8l-4 4z" fill="#8b8f9c"/></svg>
<svg style="left:1224px;top:106px" width="17" height="18"><path d="M1 5.5h10.5l1 1v10H1z" fill="#46567a" stroke="#2a3450" stroke-width="0.8"/><rect x="2.5" y="6" width="2" height="4" fill="#8a9ab8"/><rect x="3" y="11.5" width="7.5" height="4.5" fill="#f4f6fa"/><rect x="3" y="14.5" width="7.5" height="1.5" fill="#3a8ad8"/><path d="M6.5 5.5h4.5V2l5 4.8-5 4.8V8.2H6.5z" fill="#92d832" stroke="#3a7a10" stroke-width="0.9" stroke-linejoin="round"/></svg>
<div class="a" style="left:942px;top:134px;width:318px;height:670px;background:#fff;border:1px solid #a9acb6"></div>
<div class="a" style="left:0;top:0;width:1274px;height:818px;overflow:hidden;clip-path:inset(135px 32px 32px 943px)"><div class="a" style="left:943px;top:135px;width:299px;height:16px;background:#87cefa;"></div><svg style="left:948px;top:141px" width="8" height="5"><path d="M0 0h7l-3.5 3.5z" fill="#7d8190"/></svg><div class="t" style="left:962px;top:137px;font-size:11px;color:#1c1c3a;">Structure</div><div class="a" style="left:943px;top:151px;width:16px;height:34px;background:#87cefa;"></div><div class="a" style="left:959px;top:151px;width:135px;height:17px;background:#f5f5f8;border-right:1px solid #d8dae1;border-bottom:1px solid #d8dae1"></div><div class="a" style="left:1094px;top:151px;width:101px;height:17px;background:#fff;border-right:1px solid #d8dae1;border-bottom:1px solid #d8dae1"></div><div class="a" style="left:1195px;top:151px;width:47px;height:17px;background:#fff;border-right:1px solid #d8dae1;border-bottom:1px solid #d8dae1"></div><div class="t" style="left:977px;top:153px;font-size:11px;color:#1c1c3a;">Full Name</div><div class="t" style="left:1098px;top:153px;font-size:11px;color:#1c1c3a;">Dumps/Dump1</div><div class="t" style="left:1199px;top:153px;font-size:11px;color:#1c1c3a;">Dumps/D</div><div class="a" style="left:959px;top:168px;width:135px;height:17px;background:#f5f5f8;border-right:1px solid #d8dae1;border-bottom:1px solid #d8dae1"></div><div class="a" style="left:1094px;top:168px;width:101px;height:17px;background:#fff;border-right:1px solid #d8dae1;border-bottom:1px solid #d8dae1"></div><div class="a" style="left:1195px;top:168px;width:47px;height:17px;background:#fff;border-right:1px solid #d8dae1;border-bottom:1px solid #d8dae1"></div><div class="t" style="left:977px;top:170px;font-size:11px;color:#1c1c3a;">UID</div><div class="t" style="left:1072px;top:170px;width:120px;text-align:right;font-size:11px;color:#1c1c3a;">5474</div><div class="a" style="left:943px;top:185px;width:299px;height:2px;background:#f2f3f6;"></div><div class="a" style="left:943px;top:187px;width:299px;height:19px;background:#87cefa;"></div><svg style="left:948px;top:194px" width="8" height="5"><path d="M0 0h7l-3.5 3.5z" fill="#7d8190"/></svg><div class="t" style="left:962px;top:190px;font-size:11px;color:#1c1c3a;">Levels</div><div class="a" style="left:943px;top:206px;width:16px;height:119px;background:#87cefa;"></div><div class="a" style="left:959px;top:206px;width:135px;height:17px;background:#f5f5f8;border-right:1px solid #d8dae1;border-bottom:1px solid #d8dae1"></div><div class="a" style="left:1094px;top:206px;width:101px;height:17px;background:#fff;border-right:1px solid #d8dae1;border-bottom:1px solid #d8dae1"></div><div class="a" style="left:1195px;top:206px;width:47px;height:17px;background:#fff;border-right:1px solid #d8dae1;border-bottom:1px solid #d8dae1"></div><div class="a" style="left:995px;top:209px;width:1px;height:11px;background:#d8dae1"></div><div class="a" style="left:1145px;top:209px;width:1px;height:11px;background:#d8dae1"></div><div class="t" style="left:977px;top:208px;font-size:11px;color:#1c1c3a;">0</div><div class="t" style="left:998px;top:208px;font-size:11px;color:#1c1c3a;">OpenPit/Dumps/B...</div><div class="t" style="left:1098px;top:208px;font-size:11px;color:#1c1c3a;">Dumps</div><div class="t" style="left:1149px;top:208px;font-size:11px;color:#1c1c3a;">1</div><div class="t" style="left:1199px;top:208px;font-size:11px;color:#1c1c3a;">Dumps</div><div class="a" style="left:959px;top:223px;width:135px;height:17px;background:#f5f5f8;border-right:1px solid #d8dae1;border-bottom:1px solid #d8dae1"></div><div class="a" style="left:1094px;top:223px;width:101px;height:17px;background:#fff;border-right:1px solid #d8dae1;border-bottom:1px solid #d8dae1"></div><div class="a" style="left:1195px;top:223px;width:47px;height:17px;background:#fff;border-right:1px solid #d8dae1;border-bottom:1px solid #d8dae1"></div><div class="a" style="left:995px;top:226px;width:1px;height:11px;background:#d8dae1"></div><div class="a" style="left:1145px;top:226px;width:1px;height:11px;background:#d8dae1"></div><div class="t" style="left:977px;top:225px;font-size:11px;color:#1c1c3a;">1</div><div class="t" style="left:998px;top:225px;font-size:11px;color:#1c1c3a;">Mine/Dump</div><div class="t" style="left:1098px;top:225px;font-size:11px;color:#1c1c3a;">Dump1</div><div class="t" style="left:1149px;top:225px;font-size:11px;color:#1c1c3a;">0</div><div class="t" style="left:1199px;top:225px;font-size:11px;color:#1c1c3a;">Dump2</div><div class="a" style="left:959px;top:240px;width:135px;height:17px;background:#f5f5f8;border-right:1px solid #d8dae1;border-bottom:1px solid #d8dae1"></div><div class="a" style="left:1094px;top:240px;width:101px;height:17px;background:#fff;border-right:1px solid #d8dae1;border-bottom:1px solid #d8dae1"></div><div class="a" style="left:1195px;top:240px;width:47px;height:17px;background:#fff;border-right:1px solid #d8dae1;border-bottom:1px solid #d8dae1"></div><div class="a" style="left:995px;top:243px;width:1px;height:11px;background:#d8dae1"></div><div class="a" style="left:1145px;top:243px;width:1px;height:11px;background:#d8dae1"></div><div class="t" style="left:977px;top:242px;font-size:11px;color:#1c1c3a;">2</div><div class="t" style="left:998px;top:242px;font-size:11px;color:#1c1c3a;">Pit/Lift</div><div class="t" style="left:1098px;top:242px;font-size:11px;color:#1c1c3a;"></div><div class="t" style="left:1149px;top:242px;font-size:11px;color:#1c1c3a;"></div><div class="t" style="left:1199px;top:242px;font-size:11px;color:#1c1c3a;"></div><div class="a" style="left:959px;top:257px;width:135px;height:17px;background:#f5f5f8;border-right:1px solid #d8dae1;border-bottom:1px solid #d8dae1"></div><div class="a" style="left:1094px;top:257px;width:101px;height:17px;background:#fff;border-right:1px solid #d8dae1;border-bottom:1px solid #d8dae1"></div><div class="a" style="left:1195px;top:257px;width:47px;height:17px;background:#fff;border-right:1px solid #d8dae1;border-bottom:1px solid #d8dae1"></div><div class="a" style="left:995px;top:260px;width:1px;height:11px;background:#d8dae1"></div><div class="a" style="left:1145px;top:260px;width:1px;height:11px;background:#d8dae1"></div><div class="t" style="left:977px;top:259px;font-size:11px;color:#1c1c3a;">3</div><div class="t" style="left:998px;top:259px;font-size:11px;color:#1c1c3a;">Stage/Block</div><div class="t" style="left:1098px;top:259px;font-size:11px;color:#1c1c3a;"></div><div class="t" style="left:1149px;top:259px;font-size:11px;color:#1c1c3a;"></div><div class="t" style="left:1199px;top:259px;font-size:11px;color:#1c1c3a;"></div><div class="a" style="left:959px;top:274px;width:135px;height:17px;background:#f5f5f8;border-right:1px solid #d8dae1;border-bottom:1px solid #d8dae1"></div><div class="a" style="left:1094px;top:274px;width:101px;height:17px;background:#fff;border-right:1px solid #d8dae1;border-bottom:1px solid #d8dae1"></div><div class="a" style="left:1195px;top:274px;width:47px;height:17px;background:#fff;border-right:1px solid #d8dae1;border-bottom:1px solid #d8dae1"></div><div class="a" style="left:995px;top:277px;width:1px;height:11px;background:#d8dae1"></div><div class="a" style="left:1145px;top:277px;width:1px;height:11px;background:#d8dae1"></div><div class="t" style="left:977px;top:276px;font-size:11px;color:#1c1c3a;">4</div><div class="t" style="left:998px;top:276px;font-size:11px;color:#1c1c3a;">Bench</div><div class="t" style="left:1098px;top:276px;font-size:11px;color:#1c1c3a;"></div><div class="t" style="left:1149px;top:276px;font-size:11px;color:#1c1c3a;"></div><div class="t" style="left:1199px;top:276px;font-size:11px;color:#1c1c3a;"></div><div class="a" style="left:959px;top:291px;width:135px;height:17px;background:#f5f5f8;border-right:1px solid #d8dae1;border-bottom:1px solid #d8dae1"></div><div class="a" style="left:1094px;top:291px;width:101px;height:17px;background:#fff;border-right:1px solid #d8dae1;border-bottom:1px solid #d8dae1"></div><div class="a" style="left:1195px;top:291px;width:47px;height:17px;background:#fff;border-right:1px solid #d8dae1;border-bottom:1px solid #d8dae1"></div><div class="a" style="left:995px;top:294px;width:1px;height:11px;background:#d8dae1"></div><div class="a" style="left:1145px;top:294px;width:1px;height:11px;background:#d8dae1"></div><div class="t" style="left:977px;top:293px;font-size:11px;color:#1c1c3a;">5</div><div class="t" style="left:998px;top:293px;font-size:11px;color:#1c1c3a;">Blast</div><div class="t" style="left:1098px;top:293px;font-size:11px;color:#1c1c3a;"></div><div class="t" style="left:1149px;top:293px;font-size:11px;color:#1c1c3a;"></div><div class="t" style="left:1199px;top:293px;font-size:11px;color:#1c1c3a;"></div><div class="a" style="left:959px;top:308px;width:135px;height:17px;background:#f5f5f8;border-right:1px solid #d8dae1;border-bottom:1px solid #d8dae1"></div><div class="a" style="left:1094px;top:308px;width:101px;height:17px;background:#fff;border-right:1px solid #d8dae1;border-bottom:1px solid #d8dae1"></div><div class="a" style="left:1195px;top:308px;width:47px;height:17px;background:#fff;border-right:1px solid #d8dae1;border-bottom:1px solid #d8dae1"></div><div class="a" style="left:995px;top:311px;width:1px;height:11px;background:#d8dae1"></div><div class="a" style="left:1145px;top:311px;width:1px;height:11px;background:#d8dae1"></div><div class="t" style="left:977px;top:310px;font-size:11px;color:#1c1c3a;">6</div><div class="t" style="left:998px;top:310px;font-size:11px;color:#1c1c3a;">Block</div><div class="t" style="left:1098px;top:310px;font-size:11px;color:#1c1c3a;"></div><div class="t" style="left:1149px;top:310px;font-size:11px;color:#1c1c3a;"></div><div class="t" style="left:1199px;top:310px;font-size:11px;color:#1c1c3a;"></div><div class="a" style="left:943px;top:325px;width:299px;height:18px;background:#ffd700;"></div><svg style="left:948px;top:332px" width="8" height="5"><path d="M0 0h7l-3.5 3.5z" fill="#7d8190"/></svg><div class="t" style="left:962px;top:328px;font-size:11px;color:#1c1c3a;">Misc</div><div class="a" style="left:943px;top:343px;width:16px;height:291px;background:#ffd700;"></div><div class="a" style="left:959px;top:343px;width:135px;height:17px;background:#f5f5f8;border-right:1px solid #d8dae1;border-bottom:1px solid #d8dae1"></div><div class="a" style="left:1094px;top:343px;width:101px;height:17px;background:#fff;border-right:1px solid #d8dae1;border-bottom:1px solid #d8dae1"></div><div class="a" style="left:1195px;top:343px;width:47px;height:17px;background:#fff;border-right:1px solid #d8dae1;border-bottom:1px solid #d8dae1"></div><div class="t" style="left:977px;top:345px;font-size:11px;color:#1c1c3a;">blastDelay</div><div class="t" style="left:1072px;top:345px;width:120px;text-align:right;font-size:11px;color:#1c1c3a;">0</div><div class="a" style="left:959px;top:360px;width:135px;height:17px;background:#f5f5f8;border-right:1px solid #d8dae1;border-bottom:1px solid #d8dae1"></div><div class="a" style="left:1094px;top:360px;width:101px;height:17px;background:#fff;border-right:1px solid #d8dae1;border-bottom:1px solid #d8dae1"></div><div class="a" style="left:1195px;top:360px;width:47px;height:17px;background:#fff;border-right:1px solid #d8dae1;border-bottom:1px solid #d8dae1"></div><div class="t" style="left:977px;top:362px;font-size:11px;color:#1c1c3a;">flitchList</div><div class="a" style="left:959px;top:377px;width:135px;height:17px;background:#f5f5f8;border-right:1px solid #d8dae1;border-bottom:1px solid #d8dae1"></div><div class="a" style="left:1094px;top:377px;width:101px;height:17px;background:#fff;border-right:1px solid #d8dae1;border-bottom:1px solid #d8dae1"></div><div class="a" style="left:1195px;top:377px;width:47px;height:17px;background:#fff;border-right:1px solid #d8dae1;border-bottom:1px solid #d8dae1"></div><div class="t" style="left:977px;top:379px;font-size:11px;color:#1c1c3a;">flitchIndex</div><div class="t" style="left:1072px;top:379px;width:120px;text-align:right;font-size:11px;color:#1c1c3a;">0</div><div class="a" style="left:959px;top:394px;width:135px;height:17px;background:#f5f5f8;border-right:1px solid #d8dae1;border-bottom:1px solid #d8dae1"></div><div class="a" style="left:1094px;top:394px;width:101px;height:17px;background:#fff;border-right:1px solid #d8dae1;border-bottom:1px solid #d8dae1"></div><div class="a" style="left:1195px;top:394px;width:47px;height:17px;background:#fff;border-right:1px solid #d8dae1;border-bottom:1px solid #d8dae1"></div><div class="t" style="left:977px;top:396px;font-size:11px;color:#1c1c3a;">blastFloor</div><div class="t" style="left:1072px;top:396px;width:120px;text-align:right;font-size:11px;color:#1c1c3a;">830.0</div><div class="a" style="left:959px;top:411px;width:135px;height:17px;background:#f5f5f8;border-right:1px solid #d8dae1;border-bottom:1px solid #d8dae1"></div><div class="a" style="left:1094px;top:411px;width:101px;height:17px;background:#fff;border-right:1px solid #d8dae1;border-bottom:1px solid #d8dae1"></div><div class="a" style="left:1195px;top:411px;width:47px;height:17px;background:#fff;border-right:1px solid #d8dae1;border-bottom:1px solid #d8dae1"></div><div class="t" style="left:977px;top:413px;font-size:11px;color:#1c1c3a;">drillSource</div><div class="a" style="left:959px;top:428px;width:135px;height:17px;background:#f5f5f8;border-right:1px solid #d8dae1;border-bottom:1px solid #d8dae1"></div><div class="a" style="left:1094px;top:428px;width:101px;height:17px;background:#fff;border-right:1px solid #d8dae1;border-bottom:1px solid #d8dae1"></div><div class="a" style="left:1195px;top:428px;width:47px;height:17px;background:#fff;border-right:1px solid #d8dae1;border-bottom:1px solid #d8dae1"></div><div class="t" style="left:977px;top:430px;font-size:11px;color:#1c1c3a;">hardness</div><div class="a" style="left:959px;top:445px;width:135px;height:17px;background:#f5f5f8;border-right:1px solid #d8dae1;border-bottom:1px solid #d8dae1"></div><div class="a" style="left:1094px;top:445px;width:101px;height:17px;background:#fff;border-right:1px solid #d8dae1;border-bottom:1px solid #d8dae1"></div><div class="a" style="left:1195px;top:445px;width:47px;height:17px;background:#fff;border-right:1px solid #d8dae1;border-bottom:1px solid #d8dae1"></div><div class="t" style="left:977px;top:447px;font-size:11px;color:#1c1c3a;">blastStatus</div><div class="a" style="left:959px;top:462px;width:135px;height:17px;background:#f5f5f8;border-right:1px solid #d8dae1;border-bottom:1px solid #d8dae1"></div><div class="a" style="left:1094px;top:462px;width:101px;height:17px;background:#fff;border-right:1px solid #d8dae1;border-bottom:1px solid #d8dae1"></div><div class="a" style="left:1195px;top:462px;width:47px;height:17px;background:#fff;border-right:1px solid #d8dae1;border-bottom:1px solid #d8dae1"></div><div class="t" style="left:977px;top:464px;font-size:11px;color:#1c1c3a;">dataSource</div><div class="a" style="left:959px;top:479px;width:135px;height:17px;background:#f5f5f8;border-right:1px solid #d8dae1;border-bottom:1px solid #d8dae1"></div><div class="a" style="left:1094px;top:479px;width:101px;height:17px;background:#fff;border-right:1px solid #d8dae1;border-bottom:1px solid #d8dae1"></div><div class="a" style="left:1195px;top:479px;width:47px;height:17px;background:#fff;border-right:1px solid #d8dae1;border-bottom:1px solid #d8dae1"></div><div class="t" style="left:977px;top:481px;font-size:11px;color:#1c1c3a;">presplitPerimeter</div><div class="t" style="left:1072px;top:481px;width:120px;text-align:right;font-size:11px;color:#1c1c3a;">0</div><div class="a" style="left:959px;top:496px;width:135px;height:17px;background:#f5f5f8;border-right:1px solid #d8dae1;border-bottom:1px solid #d8dae1"></div><div class="a" style="left:1094px;top:496px;width:101px;height:17px;background:#fff;border-right:1px solid #d8dae1;border-bottom:1px solid #d8dae1"></div><div class="a" style="left:1195px;top:496px;width:47px;height:17px;background:#fff;border-right:1px solid #d8dae1;border-bottom:1px solid #d8dae1"></div><div class="t" style="left:977px;top:498px;font-size:11px;color:#1c1c3a;">surfaceArea</div><div class="t" style="left:1072px;top:498px;width:120px;text-align:right;font-size:11px;color:#1c1c3a;">1,135,801</div><div class="a" style="left:959px;top:513px;width:135px;height:17px;background:#f5f5f8;border-right:1px solid #d8dae1;border-bottom:1px solid #d8dae1"></div><div class="a" style="left:1094px;top:513px;width:101px;height:17px;background:#fff;border-right:1px solid #d8dae1;border-bottom:1px solid #d8dae1"></div><div class="a" style="left:1195px;top:513px;width:47px;height:17px;background:#fff;border-right:1px solid #d8dae1;border-bottom:1px solid #d8dae1"></div><div class="t" style="left:977px;top:515px;font-size:11px;color:#1c1c3a;">blockType</div><div class="t" style="left:1098px;top:515px;font-size:11px;color:#1c1c3a;">Production</div><div class="t" style="left:1199px;top:515px;font-size:11px;color:#1c1c3a;">Productio</div><div class="a" style="left:959px;top:530px;width:135px;height:17px;background:#f5f5f8;border-right:1px solid #d8dae1;border-bottom:1px solid #d8dae1"></div><div class="a" style="left:1094px;top:530px;width:101px;height:17px;background:#fff;border-right:1px solid #d8dae1;border-bottom:1px solid #d8dae1"></div><div class="a" style="left:1195px;top:530px;width:47px;height:17px;background:#fff;border-right:1px solid #d8dae1;border-bottom:1px solid #d8dae1"></div><div class="t" style="left:977px;top:532px;font-size:11px;color:#1c1c3a;">solidVolume</div><div class="t" style="left:971px;top:532px;width:120px;text-align:right;font-size:11px;color:#1c1c3a;color:#8a8a92">m³</div><div class="t" style="left:1072px;top:532px;width:120px;text-align:right;font-size:11px;color:#1c1c3a;">15,868,445</div><div class="t" style="left:1236px;top:532px;font-size:11px;color:#1c1c3a">1</div><div class="a" style="left:959px;top:547px;width:135px;height:17px;background:#f5f5f8;border-right:1px solid #d8dae1;border-bottom:1px solid #d8dae1"></div><div class="a" style="left:1094px;top:547px;width:101px;height:17px;background:#fff;border-right:1px solid #d8dae1;border-bottom:1px solid #d8dae1"></div><div class="a" style="left:1195px;top:547px;width:47px;height:17px;background:#fff;border-right:1px solid #d8dae1;border-bottom:1px solid #d8dae1"></div><div class="t" style="left:977px;top:549px;font-size:11px;color:#1c1c3a;">remaining</div><div class="t" style="left:971px;top:549px;width:120px;text-align:right;font-size:11px;color:#1c1c3a;color:#8a8a92">m³/m³</div><div class="t" style="left:1072px;top:549px;width:120px;text-align:right;font-size:11px;color:#1c1c3a;">1.00</div><div class="a" style="left:959px;top:564px;width:283px;height:19px;background:#fde46a;"></div><svg style="left:964px;top:572px" width="8" height="5"><path d="M0 0h7l-3.5 3.5z" fill="#7d8190"/></svg><div class="t" style="left:978px;top:567px;font-size:11px;color:#1c1c3a;">centroid</div><div class="a" style="left:959px;top:583px;width:17px;height:51px;background:#fde46a;"></div><div class="a" style="left:976px;top:583px;width:118px;height:17px;background:#f5f5f8;border-right:1px solid #d8dae1;border-bottom:1px solid #d8dae1"></div><div class="a" style="left:1094px;top:583px;width:101px;height:17px;background:#fff;border-right:1px solid #d8dae1;border-bottom:1px solid #d8dae1"></div><div class="a" style="left:1195px;top:583px;width:47px;height:17px;background:#fff;border-right:1px solid #d8dae1;border-bottom:1px solid #d8dae1"></div><div class="t" style="left:993px;top:585px;font-size:11px;color:#1c1c3a;">x</div><div class="t" style="left:971px;top:585px;width:120px;text-align:right;font-size:11px;color:#1c1c3a;color:#8a8a92">m</div><div class="t" style="left:1072px;top:585px;width:120px;text-align:right;font-size:11px;color:#1c1c3a;">3,192.57</div><div class="a" style="left:976px;top:600px;width:118px;height:17px;background:#f5f5f8;border-right:1px solid #d8dae1;border-bottom:1px solid #d8dae1"></div><div class="a" style="left:1094px;top:600px;width:101px;height:17px;background:#fff;border-right:1px solid #d8dae1;border-bottom:1px solid #d8dae1"></div><div class="a" style="left:1195px;top:600px;width:47px;height:17px;background:#fff;border-right:1px solid #d8dae1;border-bottom:1px solid #d8dae1"></div><div class="t" style="left:993px;top:602px;font-size:11px;color:#1c1c3a;">y</div><div class="t" style="left:971px;top:602px;width:120px;text-align:right;font-size:11px;color:#1c1c3a;color:#8a8a92">m</div><div class="t" style="left:1072px;top:602px;width:120px;text-align:right;font-size:11px;color:#1c1c3a;">1,472.68</div><div class="a" style="left:976px;top:617px;width:118px;height:17px;background:#f5f5f8;border-right:1px solid #d8dae1;border-bottom:1px solid #d8dae1"></div><div class="a" style="left:1094px;top:617px;width:101px;height:17px;background:#fff;border-right:1px solid #d8dae1;border-bottom:1px solid #d8dae1"></div><div class="a" style="left:1195px;top:617px;width:47px;height:17px;background:#fff;border-right:1px solid #d8dae1;border-bottom:1px solid #d8dae1"></div><div class="t" style="left:993px;top:619px;font-size:11px;color:#1c1c3a;">z</div><div class="t" style="left:971px;top:619px;width:120px;text-align:right;font-size:11px;color:#1c1c3a;color:#8a8a92">m</div><div class="t" style="left:1072px;top:619px;width:120px;text-align:right;font-size:11px;color:#1c1c3a;">840.55</div><div class="a" style="left:943px;top:634px;width:299px;height:19px;background:#ffb6c1;"></div><svg style="left:948px;top:642px" width="8" height="5"><path d="M0 0h7l-3.5 3.5z" fill="#7d8190"/></svg><div class="t" style="left:962px;top:637px;font-size:11px;color:#1c1c3a;">Drilling</div><div class="a" style="left:943px;top:653px;width:16px;height:133px;background:#ffb6c1;"></div><div class="a" style="left:959px;top:653px;width:283px;height:19px;background:#ffccd4;"></div><svg style="left:964px;top:661px" width="8" height="5"><path d="M0 0h7l-3.5 3.5z" fill="#7d8190"/></svg><div class="t" style="left:978px;top:656px;font-size:11px;color:#1c1c3a;">pres_medi_229</div><div class="a" style="left:959px;top:672px;width:17px;height:114px;background:#ffccd4;"></div><div class="a" style="left:976px;top:672px;width:118px;height:17px;background:#f5f5f8;border-right:1px solid #d8dae1;border-bottom:1px solid #d8dae1"></div><div class="a" style="left:1094px;top:672px;width:101px;height:17px;background:#fff;border-right:1px solid #d8dae1;border-bottom:1px solid #d8dae1"></div><div class="a" style="left:1195px;top:672px;width:47px;height:17px;background:#fff;border-right:1px solid #d8dae1;border-bottom:1px solid #d8dae1"></div><div class="t" style="left:993px;top:674px;font-size:11px;color:#1c1c3a;">length</div><div class="t" style="left:971px;top:674px;width:120px;text-align:right;font-size:11px;color:#1c1c3a;color:#8a8a92">m</div><div class="t" style="left:1072px;top:674px;width:120px;text-align:right;font-size:11px;color:#1c1c3a;">0</div><div class="a" style="left:976px;top:689px;width:118px;height:17px;background:#f5f5f8;border-right:1px solid #d8dae1;border-bottom:1px solid #d8dae1"></div><div class="a" style="left:1094px;top:689px;width:101px;height:17px;background:#fff;border-right:1px solid #d8dae1;border-bottom:1px solid #d8dae1"></div><div class="a" style="left:1195px;top:689px;width:47px;height:17px;background:#fff;border-right:1px solid #d8dae1;border-bottom:1px solid #d8dae1"></div><div class="t" style="left:993px;top:691px;font-size:11px;color:#1c1c3a;">rate</div><div class="t" style="left:1072px;top:691px;width:120px;text-align:right;font-size:11px;color:#1c1c3a;">0.0</div><div class="a" style="left:976px;top:706px;width:118px;height:17px;background:#f5f5f8;border-right:1px solid #d8dae1;border-bottom:1px solid #d8dae1"></div><div class="a" style="left:1094px;top:706px;width:101px;height:17px;background:#fff;border-right:1px solid #d8dae1;border-bottom:1px solid #d8dae1"></div><div class="a" style="left:1195px;top:706px;width:47px;height:17px;background:#fff;border-right:1px solid #d8dae1;border-bottom:1px solid #d8dae1"></div><div class="t" style="left:993px;top:708px;font-size:11px;color:#1c1c3a;">volume</div><div class="t" style="left:971px;top:708px;width:120px;text-align:right;font-size:11px;color:#1c1c3a;color:#8a8a92">m³</div><div class="t" style="left:1072px;top:708px;width:120px;text-align:right;font-size:11px;color:#1c1c3a;">0</div><div class="a" style="left:976px;top:723px;width:118px;height:17px;background:#f5f5f8;border-right:1px solid #d8dae1;border-bottom:1px solid #d8dae1"></div><div class="a" style="left:1094px;top:723px;width:101px;height:17px;background:#fff;border-right:1px solid #d8dae1;border-bottom:1px solid #d8dae1"></div><div class="a" style="left:1195px;top:723px;width:47px;height:17px;background:#fff;border-right:1px solid #d8dae1;border-bottom:1px solid #d8dae1"></div><div class="t" style="left:993px;top:725px;font-size:11px;color:#1c1c3a;">tonnes</div><div class="t" style="left:1072px;top:725px;width:120px;text-align:right;font-size:11px;color:#1c1c3a;">0</div><div class="a" style="left:976px;top:740px;width:118px;height:17px;background:#f5f5f8;border-right:1px solid #d8dae1;border-bottom:1px solid #d8dae1"></div><div class="a" style="left:1094px;top:740px;width:101px;height:17px;background:#fff;border-right:1px solid #d8dae1;border-bottom:1px solid #d8dae1"></div><div class="a" style="left:1195px;top:740px;width:47px;height:17px;background:#fff;border-right:1px solid #d8dae1;border-bottom:1px solid #d8dae1"></div><div class="t" style="left:993px;top:742px;font-size:11px;color:#1c1c3a;">holes</div><div class="t" style="left:1072px;top:742px;width:120px;text-align:right;font-size:11px;color:#1c1c3a;">0</div><div class="a" style="left:976px;top:757px;width:118px;height:17px;background:#f5f5f8;border-right:1px solid #d8dae1;border-bottom:1px solid #d8dae1"></div><div class="a" style="left:1094px;top:757px;width:101px;height:17px;background:#fff;border-right:1px solid #d8dae1;border-bottom:1px solid #d8dae1"></div><div class="a" style="left:1195px;top:757px;width:47px;height:17px;background:#fff;border-right:1px solid #d8dae1;border-bottom:1px solid #d8dae1"></div><div class="t" style="left:993px;top:759px;font-size:11px;color:#1c1c3a;">anfo</div><div class="t" style="left:971px;top:759px;width:120px;text-align:right;font-size:11px;color:#1c1c3a;color:#8a8a92">kg</div><div class="t" style="left:1072px;top:759px;width:120px;text-align:right;font-size:11px;color:#1c1c3a;">0</div><div class="a" style="left:959px;top:774.5px;width:283px;height:12px;background:#ffccd4;"></div><div class="a" style="left:959px;top:774px;width:283px;height:12px;overflow:hidden"><svg style="left:5px;top:8px" width="8" height="5"><path d="M0 0h7l-3.5 3.5z" fill="#7d8190"/></svg><div class="t" style="left:19px;top:3px;font-size:11px;color:#1c1c3a">cont_medi_bg_165</div></div></div>
<div class="a" style="left:1242px;top:135px;width:17px;height:651px;background:#f3f3f6"></div>
<svg style="left:1246px;top:140px" width="9" height="6"><path d="M0 5h8l-4-4z" fill="#a8abb6"/></svg>
<svg style="left:1246px;top:775px" width="9" height="6"><path d="M0 0h8l-4 4z" fill="#a8abb6"/></svg>
<div class="a" style="left:1246px;top:152px;width:8px;height:73px;border:1px solid #a9acb6;border-radius:4px;background:#f3f3f6"></div>
<div class="a" style="left:943px;top:786px;width:299px;height:17px;background:#f3f3f6"></div>
<div class="a" style="left:1242px;top:786px;width:17px;height:17px;background:#e9eaee"></div>
<svg style="left:949px;top:790px" width="6" height="9"><path d="M5 0v8l-4-4z" fill="#a8abb6"/></svg>
<svg style="left:1231px;top:790px" width="6" height="9"><path d="M0 0v8l4-4z" fill="#a8abb6"/></svg>
<div class="a" style="left:960px;top:791px;width:96px;height:7px;border:1px solid #a9acb6;border-radius:4px;background:#f3f3f6"></div></body></html>
